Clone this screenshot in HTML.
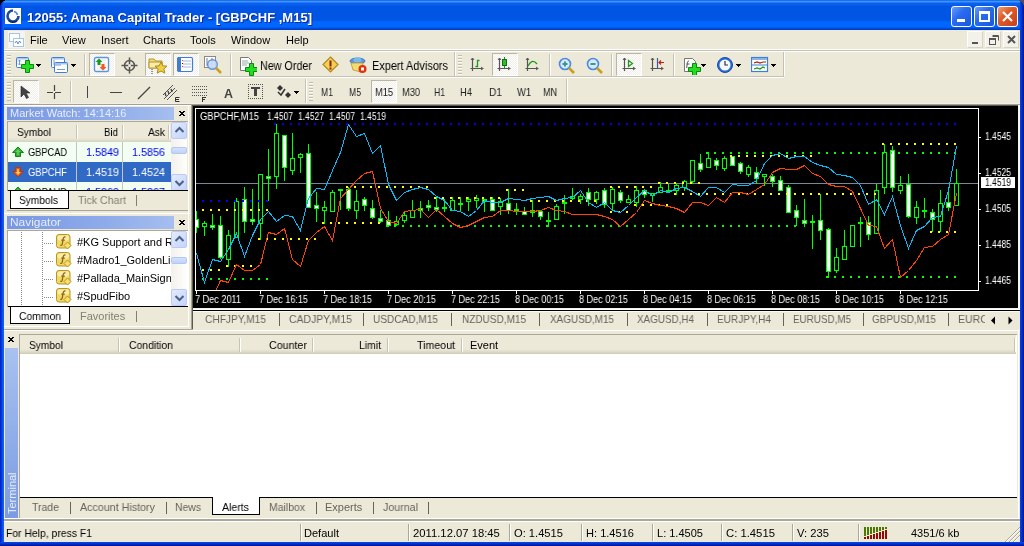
<!DOCTYPE html><html><head><meta charset="utf-8"><style>
*{margin:0;padding:0;box-sizing:border-box}
html,body{width:1024px;height:546px;overflow:hidden;background:#ECE9D8;font-family:"Liberation Sans", sans-serif;font-size:11px;color:#000}
.t{position:absolute;white-space:nowrap;line-height:13px;will-change:transform}
.a{position:absolute}
</style></head><body><div style="position:absolute;left:0px;top:0px;width:1024px;height:30px;background:linear-gradient(to bottom,#0047D8 0px,#3D95FF 1px,#3D95FF 2px,#0A5FEF 3px,#0A5FEF 5px,#0055E5 6px,#0055E5 20px,#0066FF 22px,#0066FF 27px,#0040C8 29px,#0040C8 30px)"></div>
<div style="position:absolute;left:0px;top:0px;width:4px;height:546px;background:linear-gradient(to right,#001EA0,#0030DD 1px,#0040F0 2px,#1060F0 3px)"></div>
<div style="position:absolute;left:1020px;top:0px;width:4px;height:546px;background:linear-gradient(to right,#0A40F0,#0030C8 2px,#00108A 4px)"></div>
<div style="position:absolute;left:0px;top:542px;width:1024px;height:4px;background:linear-gradient(to bottom,#0847F5,#0030C8 2px,#001090 4px)"></div>
<div style="position:absolute;left:0px;top:0px;width:5px;height:1px;background:#000"></div>
<div style="position:absolute;left:1019px;top:0px;width:5px;height:1px;background:#505050"></div>
<div style="position:absolute;left:0px;top:1px;width:3px;height:1px;background:#000"></div>
<div style="position:absolute;left:1021px;top:1px;width:3px;height:1px;background:#505050"></div>
<div style="position:absolute;left:0px;top:2px;width:2px;height:1px;background:#000"></div>
<div style="position:absolute;left:1022px;top:2px;width:2px;height:1px;background:#505050"></div>
<div style="position:absolute;left:0px;top:3px;width:1px;height:1px;background:#000"></div>
<div style="position:absolute;left:1023px;top:3px;width:1px;height:1px;background:#505050"></div>
<div style="position:absolute;left:0px;top:4px;width:1px;height:1px;background:#000"></div>
<div style="position:absolute;left:1023px;top:4px;width:1px;height:1px;background:#505050"></div>
<svg class="a" style="left:5px;top:8px" width="16" height="16" viewBox="0 0 16 16">
<rect x="0" y="0" width="16" height="16" fill="#fff"/>
<path d="M8 2.5A5.5 5.5 0 1 0 13.5 8" fill="none" stroke="#1E4A9A" stroke-width="2.6"/>
<path d="M3.5 12.5Q7 15.5 12 13" fill="none" stroke="#0A2A70" stroke-width="1.6"/>
<path d="M9 3.5A4.5 4.5 0 0 1 12.5 7" fill="none" stroke="#5A8AD0" stroke-width="1.6"/>
<circle cx="8" cy="8" r="2.2" fill="#fff"/>
</svg>
<div class="t" style="left:27px;top:10px;font-size:13px;line-height:15px;color:#fff;font-weight:bold;transform:scaleX(1.0003);transform-origin:0 0;text-shadow:1px 1px 0 #0A2A9A">12055: Amana Capital Trader - [GBPCHF ,M15]</div>
<div class="a" style="left:951px;top:6px;width:21px;height:21px;border:1px solid #fff;border-radius:3px;background:linear-gradient(135deg,#6A9CF7 0%,#2A6BF0 40%,#1A56E0 100%)"></div>
<div class="a" style="left:974px;top:6px;width:21px;height:21px;border:1px solid #fff;border-radius:3px;background:linear-gradient(135deg,#6A9CF7 0%,#2A6BF0 40%,#1A56E0 100%)"></div>
<div class="a" style="left:997px;top:6px;width:21px;height:21px;border:1px solid #fff;border-radius:3px;background:linear-gradient(135deg,#F0A070 0%,#E05A28 40%,#C8401A 100%)"></div>
<div style="position:absolute;left:957px;top:19px;width:8px;height:3px;background:#fff"></div>
<div style="position:absolute;left:979px;top:11px;width:11px;height:11px;border:2px solid #fff;border-top-width:3px"></div>
<svg class="a" style="left:1001px;top:10px" width="13" height="13" viewBox="0 0 13 13"><path d="M2 2L11 11M11 2L2 11" stroke="#fff" stroke-width="2.2"/></svg>
<svg class="a" style="left:8px;top:31px" width="17" height="17" viewBox="0 0 17 17">
<rect x="0" y="0" width="17" height="17" fill="#F4F4F0"/>
<rect x="1.5" y="2.5" width="10" height="8" fill="#fff" stroke="#5A8AD8" stroke-dasharray="1 1"/>
<rect x="5.5" y="7.5" width="10" height="8" fill="#fff" stroke="#5A8AD8" stroke-dasharray="1 1"/>
<path d="M7 12l1.5-2 1.5 3 1.5-3 1.5 2" stroke="#5A8AD8" fill="none"/>
</svg>
<div class="t" style="left:30px;top:34px;font-size:11px;line-height:13px;">File</div>
<div class="t" style="left:62px;top:34px;font-size:11px;line-height:13px;">View</div>
<div class="t" style="left:101px;top:34px;font-size:11px;line-height:13px;">Insert</div>
<div class="t" style="left:143px;top:34px;font-size:11px;line-height:13px;">Charts</div>
<div class="t" style="left:190px;top:34px;font-size:11px;line-height:13px;">Tools</div>
<div class="t" style="left:231px;top:34px;font-size:11px;line-height:13px;">Window</div>
<div class="t" style="left:286px;top:34px;font-size:11px;line-height:13px;">Help</div>
<div style="position:absolute;left:967px;top:31px;width:16px;height:17px;background:#F2F1EA;border:1px solid;border-color:#FFF #D8D4C4 #D8D4C4 #FFF"></div>
<div style="position:absolute;left:985px;top:31px;width:16px;height:17px;background:#F2F1EA;border:1px solid;border-color:#FFF #D8D4C4 #D8D4C4 #FFF"></div>
<div style="position:absolute;left:1003px;top:31px;width:16px;height:17px;background:#F2F1EA;border:1px solid;border-color:#FFF #D8D4C4 #D8D4C4 #FFF"></div>
<div style="position:absolute;left:972px;top:42px;width:6px;height:2px;background:#555"></div>
<svg class="a" style="left:989px;top:35px" width="10" height="10" viewBox="0 0 10 10"><path d="M3.5 0.5h6v5" fill="none" stroke="#555"/><rect x="0.5" y="3.5" width="6" height="6" fill="none" stroke="#555" stroke-width="1"/><path d="M0.5 4.5h6M3.5 1.5h6" stroke="#555"/></svg>
<svg class="a" style="left:1007px;top:35px" width="9" height="9" viewBox="0 0 9 9"><path d="M1 1L8 8M8 1L1 8" stroke="#555" stroke-width="2"/></svg>
<div style="position:absolute;left:4px;top:49px;width:1016px;height:1px;background:#FFFFFF"></div>
<div style="position:absolute;left:4px;top:50px;width:1016px;height:1px;background:#C5C2B2"></div>
<div style="position:absolute;left:4px;top:51px;width:1016px;height:1px;background:#FFFFFF"></div>
<div style="position:absolute;left:4px;top:76px;width:780px;height:1px;background:#C5C2B2"></div>
<div style="position:absolute;left:4px;top:77px;width:780px;height:1px;background:#FFFFFF"></div>
<div style="position:absolute;left:4px;top:103px;width:1016px;height:1px;background:#F2F0E6"></div>
<div style="position:absolute;left:4px;top:104px;width:1016px;height:1px;background:#A5A28F"></div>
<div style="position:absolute;left:4px;top:105px;width:188px;height:1px;background:#FFFFFF"></div>
<div style="position:absolute;left:454px;top:52px;width:1px;height:24px;background:#C5C2B2"></div>
<div style="position:absolute;left:455px;top:52px;width:1px;height:24px;background:#FFF"></div>
<div style="position:absolute;left:783px;top:52px;width:1px;height:24px;background:#C5C2B2"></div>
<div style="position:absolute;left:784px;top:52px;width:1px;height:24px;background:#FFF"></div>
<div style="position:absolute;left:305px;top:79px;width:1px;height:24px;background:#C5C2B2"></div>
<div style="position:absolute;left:306px;top:79px;width:1px;height:24px;background:#FFF"></div>
<div style="position:absolute;left:566px;top:79px;width:1px;height:24px;background:#C5C2B2"></div>
<div style="position:absolute;left:567px;top:79px;width:1px;height:24px;background:#FFF"></div>
<div style="position:absolute;left:306px;top:102px;width:1px;height:1px;"></div>
<svg class="a" style="left:7px;top:55px" width="4" height="20" shape-rendering="crispEdges"><rect x="0" y="0" width="4" height="1" fill="#C1BEAC"/><rect x="0" y="1" width="4" height="1" fill="#FBFAF6"/><rect x="0" y="3" width="4" height="1" fill="#C1BEAC"/><rect x="0" y="4" width="4" height="1" fill="#FBFAF6"/><rect x="0" y="6" width="4" height="1" fill="#C1BEAC"/><rect x="0" y="7" width="4" height="1" fill="#FBFAF6"/><rect x="0" y="9" width="4" height="1" fill="#C1BEAC"/><rect x="0" y="10" width="4" height="1" fill="#FBFAF6"/><rect x="0" y="12" width="4" height="1" fill="#C1BEAC"/><rect x="0" y="13" width="4" height="1" fill="#FBFAF6"/><rect x="0" y="15" width="4" height="1" fill="#C1BEAC"/><rect x="0" y="16" width="4" height="1" fill="#FBFAF6"/><rect x="0" y="18" width="4" height="1" fill="#C1BEAC"/><rect x="0" y="19" width="4" height="1" fill="#FBFAF6"/></svg>
<svg class="a" style="left:16px;top:57px;will-change:transform" width="18" height="16" viewBox="0 0 18 16"><rect x="0.5" y="0.5" width="12" height="10" rx="1" fill="#fff" stroke="#3C7ED8"/><rect x="1" y="1" width="11" height="1.5" fill="#A8C8F0"/><path d="M3.5 3v5M2 4.5l1.5-1.5 1.5 1.5M2 6.5l1.5 1.5 1.5-1.5" stroke="#7A9AC8" fill="none"/><path d="M9.5 3.5h4v4h4v4h-4v4h-4v-4h-4v-4h4z" fill="#22DD22" stroke="#0A8A0A" stroke-width="1"/></svg>
<svg class="a" style="left:36px;top:64px" width="5" height="3" shape-rendering="crispEdges"><path d="M0 0H5L2.5 3Z" fill="#000"/></svg>
<svg class="a" style="left:51px;top:57px;will-change:transform" width="18" height="16" viewBox="0 0 18 16"><rect x="0.5" y="0.5" width="13" height="10" rx="1" fill="#fff" stroke="#3C7ED8"/><rect x="1" y="1" width="12" height="1.5" fill="#A8C8F0"/><rect x="3.5" y="5.5" width="13" height="10" rx="1" fill="#fff" stroke="#3C7ED8"/><rect x="4" y="6" width="12" height="1.5" fill="#A8C8F0"/><path d="M3 3v5h7M6 12.5h8" stroke="#7A9AC8" fill="none"/></svg>
<svg class="a" style="left:71px;top:64px" width="5" height="3" shape-rendering="crispEdges"><path d="M0 0H5L2.5 3Z" fill="#000"/></svg>
<div style="position:absolute;left:84px;top:54px;width:1px;height:22px;background:#C5C2B2"></div>
<div style="position:absolute;left:85px;top:54px;width:1px;height:22px;background:#FFF"></div>
<div class="a" style="left:89px;top:53px;width:26px;height:23px;border:1px solid;border-color:#B9B6A4 #FFF #FFF #B9B6A4;background-color:#F7F6F1;background-image:repeating-conic-gradient(#FFFFFF 0 25%,#F0EEE6 0 50%);background-size:2px 2px"></div>
<svg class="a" style="left:93px;top:56px;will-change:transform" width="17" height="17" viewBox="0 0 17 17"><rect x="1.5" y="1.5" width="14" height="14" rx="1.5" fill="#fff" stroke="#5A96E0" stroke-width="1.4"/><path d="M4 4h9M4 7h9M4 10h9M4 13h9" stroke="#E0E4EA"/><path d="M6 2.5L9.5 6H7.5V9H4.5V6H2.5Z" fill="#1A9A1A"/><path d="M10 14.5L13.5 11H11.5V8H8.5V11H6.5Z" fill="#F05A20"/></svg>
<svg class="a" style="left:121px;top:57px;will-change:transform" width="17" height="17" viewBox="0 0 17 17"><circle cx="8.5" cy="8.5" r="5" fill="none" stroke="#555" stroke-width="1.5"/><path d="M8.5 0.5v16M0.5 8.5h16" stroke="#555" stroke-width="1.5"/><circle cx="8.5" cy="8.5" r="1.5" fill="#ECE9D8"/></svg>
<div class="a" style="left:145px;top:53px;width:26px;height:23px;border:1px solid;border-color:#B9B6A4 #FFF #FFF #B9B6A4;background-color:#F7F6F1;background-image:repeating-conic-gradient(#FFFFFF 0 25%,#F0EEE6 0 50%);background-size:2px 2px"></div>
<svg class="a" style="left:148px;top:56px;will-change:transform" width="20" height="18" viewBox="0 0 20 18"><path d="M1 3h5l1.5 2H14v7H1z" fill="#F4DC78" stroke="#B8942A"/><path d="M1 6h13v6H1z" fill="#FBEBA8" stroke="#B8942A"/><path d="M4 13v5" stroke="#333" stroke-dasharray="1 1"/><path d="M13 6l1.8 3.8 4.2.4-3.2 2.8 1 4.1L13 15l-3.8 2.1 1-4.1-3.2-2.8 4.2-.4z" fill="#F0D040" stroke="#A88A20"/></svg>
<div class="a" style="left:173px;top:53px;width:26px;height:23px;border:1px solid;border-color:#B9B6A4 #FFF #FFF #B9B6A4;background-color:#F7F6F1;background-image:repeating-conic-gradient(#FFFFFF 0 25%,#F0EEE6 0 50%);background-size:2px 2px"></div>
<svg class="a" style="left:177px;top:57px;will-change:transform" width="17" height="16" viewBox="0 0 17 16"><rect x="0.5" y="0.5" width="15" height="14" rx="1.5" fill="#fff" stroke="#3C7ED8" stroke-width="1.2"/><rect x="1" y="1" width="3" height="13" fill="#4A7AC8"/><path d="M6 4h8M6 7h8M6 10h8" stroke="#A0B8E0"/><rect x="5" y="3" width="1" height="1" fill="#E04020"/><rect x="5" y="6" width="1" height="1" fill="#222"/><rect x="5" y="9" width="1" height="1" fill="#E04020"/></svg>
<svg class="a" style="left:204px;top:56px;will-change:transform" width="20" height="20" viewBox="0 0 20 20"><rect x="0.5" y="0.5" width="11" height="11" fill="#fff" stroke="#888"/><path d="M3 2v8M8 2v8" stroke="#6A7AA8"/><circle cx="8.5" cy="8.5" r="4.8" fill="#C8DCF8" stroke="#5A8AD8" stroke-width="1.4" opacity="0.9"/><path d="M12 12l5 5" stroke="#C8A020" stroke-width="2.5"/></svg>
<div style="position:absolute;left:230px;top:54px;width:1px;height:22px;background:#C5C2B2"></div>
<div style="position:absolute;left:231px;top:54px;width:1px;height:22px;background:#FFF"></div>
<svg class="a" style="left:239px;top:56px;will-change:transform" width="18" height="20" viewBox="0 0 18 20"><path d="M1.5 1.5h8l3 3v10h-11z" fill="#fff" stroke="#777"/><path d="M3 5h6M3 7h7M3 9h5" stroke="#9AA"/><path d="M10.5 7.5h4v4h4v4h-4v4h-4v-4h-4v-4h4z" fill="#22DD22" stroke="#0A8A0A" stroke-width="1"/></svg>
<div class="t" style="left:260px;top:59px;font-size:12px;line-height:14px;transform:scaleX(0.8963);transform-origin:0 0;">New Order</div>
<svg class="a" style="left:322px;top:56px;will-change:transform" width="17" height="18" viewBox="0 0 17 18"><path d="M8.5 1L16 8.5 8.5 16 1 8.5z" fill="#F8D050" stroke="#B08A20" stroke-width="1.2"/><path d="M8.5 4.5v6" stroke="#8A2010" stroke-width="2"/><rect x="7.5" y="11.5" width="2" height="2" fill="#8A2010"/></svg>
<svg class="a" style="left:349px;top:56px;will-change:transform" width="19" height="19" viewBox="0 0 19 19"><ellipse cx="8.5" cy="5" rx="7.5" ry="3" fill="#5A9AE0" stroke="#2A6AB0" stroke-width="0.8"/><ellipse cx="8.5" cy="4" rx="4" ry="2.5" fill="#7AB8F0"/><path d="M2 7l2 7 8 2 2-9z" fill="#F4DC70" stroke="#B8942A" stroke-width="0.8"/><circle cx="13.5" cy="13" r="4" fill="#E03010"/><rect x="12" y="11.5" width="3" height="3" fill="#fff"/></svg>
<div class="t" style="left:372px;top:59px;font-size:12px;line-height:14px;transform:scaleX(0.9117);transform-origin:0 0;">Expert Advisors</div>
<svg class="a" style="left:458px;top:55px" width="4" height="20" shape-rendering="crispEdges"><rect x="0" y="0" width="4" height="1" fill="#C1BEAC"/><rect x="0" y="1" width="4" height="1" fill="#FBFAF6"/><rect x="0" y="3" width="4" height="1" fill="#C1BEAC"/><rect x="0" y="4" width="4" height="1" fill="#FBFAF6"/><rect x="0" y="6" width="4" height="1" fill="#C1BEAC"/><rect x="0" y="7" width="4" height="1" fill="#FBFAF6"/><rect x="0" y="9" width="4" height="1" fill="#C1BEAC"/><rect x="0" y="10" width="4" height="1" fill="#FBFAF6"/><rect x="0" y="12" width="4" height="1" fill="#C1BEAC"/><rect x="0" y="13" width="4" height="1" fill="#FBFAF6"/><rect x="0" y="15" width="4" height="1" fill="#C1BEAC"/><rect x="0" y="16" width="4" height="1" fill="#FBFAF6"/><rect x="0" y="18" width="4" height="1" fill="#C1BEAC"/><rect x="0" y="19" width="4" height="1" fill="#FBFAF6"/></svg>
<svg class="a" style="left:470px;top:57px;will-change:transform" width="15" height="16" viewBox="0 0 15 16"><path d="M2.5 1v13M0.5 11.5h13" stroke="#555" stroke-width="1.2"/><path d="M1 3l1.5-2 1.5 2M11 10l2 1.5-2 1.5" stroke="#555" fill="none"/><path d="M5.5 9.5h2v-6h2" stroke="#1A9A1A" stroke-width="1.3" fill="none"/></svg>
<div class="a" style="left:492px;top:53px;width:26px;height:23px;border:1px solid;border-color:#B9B6A4 #FFF #FFF #B9B6A4;background-color:#F7F6F1;background-image:repeating-conic-gradient(#FFFFFF 0 25%,#F0EEE6 0 50%);background-size:2px 2px"></div>
<svg class="a" style="left:497px;top:57px;will-change:transform" width="15" height="16" viewBox="0 0 15 16"><path d="M2.5 1v13M0.5 11.5h13" stroke="#555" stroke-width="1.2"/><path d="M1 3l1.5-2 1.5 2M11 10l2 1.5-2 1.5" stroke="#555" fill="none"/><path d="M7.5 0v12" stroke="#1A8A1A"/><rect x="5.5" y="2.5" width="4" height="6" fill="#28C028" stroke="#107010"/></svg>
<svg class="a" style="left:525px;top:57px;will-change:transform" width="15" height="16" viewBox="0 0 15 16"><path d="M2.5 1v13M0.5 11.5h13" stroke="#555" stroke-width="1.2"/><path d="M1 3l1.5-2 1.5 2M11 10l2 1.5-2 1.5" stroke="#555" fill="none"/><path d="M3 9C5 5 8 2 12 7" stroke="#1A9A1A" stroke-width="1.3" fill="none"/></svg>
<div style="position:absolute;left:549px;top:54px;width:1px;height:22px;background:#C5C2B2"></div>
<div style="position:absolute;left:550px;top:54px;width:1px;height:22px;background:#FFF"></div>
<svg class="a" style="left:558px;top:57px;will-change:transform" width="18" height="18" viewBox="0 0 18 18"><circle cx="7" cy="7" r="5.5" fill="#D8E8FC" stroke="#4A8AE0" stroke-width="1.6"/><path d="M4.5 7h5" stroke="#3A9A8A" stroke-width="2"/><path d="M7 4.5v5" stroke="#3A9A8A" stroke-width="2"/><path d="M11 11l5 5" stroke="#C8A020" stroke-width="2.6"/></svg>
<svg class="a" style="left:586px;top:57px;will-change:transform" width="18" height="18" viewBox="0 0 18 18"><circle cx="7" cy="7" r="5.5" fill="#D8E8FC" stroke="#4A8AE0" stroke-width="1.6"/><path d="M4.5 7h5" stroke="#3A9A8A" stroke-width="2"/><path d="M11 11l5 5" stroke="#C8A020" stroke-width="2.6"/></svg>
<div style="position:absolute;left:611px;top:54px;width:1px;height:22px;background:#C5C2B2"></div>
<div style="position:absolute;left:612px;top:54px;width:1px;height:22px;background:#FFF"></div>
<div class="a" style="left:616px;top:53px;width:26px;height:23px;border:1px solid;border-color:#B9B6A4 #FFF #FFF #B9B6A4;background-color:#F7F6F1;background-image:repeating-conic-gradient(#FFFFFF 0 25%,#F0EEE6 0 50%);background-size:2px 2px"></div>
<svg class="a" style="left:622px;top:57px;will-change:transform" width="15" height="16" viewBox="0 0 15 16"><path d="M2.5 1v13M0.5 11.5h13" stroke="#555" stroke-width="1.2"/><path d="M1 3l1.5-2 1.5 2M11 10l2 1.5-2 1.5" stroke="#555" fill="none"/><path d="M6.5 3.5v6l4-3z" fill="none" stroke="#1A9A1A" stroke-width="1.3"/></svg>
<svg class="a" style="left:650px;top:57px;will-change:transform" width="15" height="16" viewBox="0 0 15 16"><path d="M2.5 1v13M0.5 11.5h13" stroke="#555" stroke-width="1.2"/><path d="M1 3l1.5-2 1.5 2M11 10l2 1.5-2 1.5" stroke="#555" fill="none"/><path d="M7.5 1v10" stroke="#3A5AA8" stroke-width="1.2"/><path d="M14 5.5H9M11 3.5l-2 2 2 2" stroke="#C02010" stroke-width="1.2" fill="none"/></svg>
<div style="position:absolute;left:673px;top:54px;width:1px;height:22px;background:#C5C2B2"></div>
<div style="position:absolute;left:674px;top:54px;width:1px;height:22px;background:#FFF"></div>
<svg class="a" style="left:683px;top:57px;will-change:transform" width="18" height="18" viewBox="0 0 18 18"><path d="M1.5 1.5h8l3 3v10h-11z" fill="#fff" stroke="#777"/><path d="M6 4c-1.5 0-1.5 1-1.8 3l-.5 4M3.5 7h3" stroke="#555" fill="none"/><path d="M9.5 6.5h4v4h4v4h-4v4h-4v-4h-4v-4h4z" fill="#22DD22" stroke="#0A8A0A" stroke-width="1"/></svg>
<svg class="a" style="left:701px;top:64px" width="5" height="3" shape-rendering="crispEdges"><path d="M0 0H5L2.5 3Z" fill="#000"/></svg>
<svg class="a" style="left:716px;top:56px;will-change:transform" width="18" height="18" viewBox="0 0 18 18"><circle cx="9" cy="9" r="7.5" fill="#2A6AD8" stroke="#1A4AA8"/><circle cx="9" cy="9" r="5.5" fill="#F4F8FF"/><path d="M9 5v4h3" stroke="#333" stroke-width="1.2" fill="none"/></svg>
<svg class="a" style="left:736px;top:64px" width="5" height="3" shape-rendering="crispEdges"><path d="M0 0H5L2.5 3Z" fill="#000"/></svg>
<svg class="a" style="left:751px;top:56px;will-change:transform" width="18" height="18" viewBox="0 0 18 18"><rect x="0.5" y="1.5" width="16" height="14" fill="#fff" stroke="#3C7ED8" stroke-width="1.2"/><rect x="1" y="2" width="15" height="2" fill="#8AB4E8"/><path d="M1 9h15" stroke="#3C7ED8"/><path d="M3 7l3-1 3 1 3-1 3 0" stroke="#A02010" stroke-width="1.2" fill="none"/><path d="M3 13l3-1 3 1 3-2 2 1" stroke="#109A10" stroke-width="1.2" fill="none"/></svg>
<svg class="a" style="left:771px;top:64px" width="5" height="3" shape-rendering="crispEdges"><path d="M0 0H5L2.5 3Z" fill="#000"/></svg>
<svg class="a" style="left:7px;top:82px" width="4" height="19" shape-rendering="crispEdges"><rect x="0" y="0" width="4" height="1" fill="#C1BEAC"/><rect x="0" y="1" width="4" height="1" fill="#FBFAF6"/><rect x="0" y="3" width="4" height="1" fill="#C1BEAC"/><rect x="0" y="4" width="4" height="1" fill="#FBFAF6"/><rect x="0" y="6" width="4" height="1" fill="#C1BEAC"/><rect x="0" y="7" width="4" height="1" fill="#FBFAF6"/><rect x="0" y="9" width="4" height="1" fill="#C1BEAC"/><rect x="0" y="10" width="4" height="1" fill="#FBFAF6"/><rect x="0" y="12" width="4" height="1" fill="#C1BEAC"/><rect x="0" y="13" width="4" height="1" fill="#FBFAF6"/><rect x="0" y="15" width="4" height="1" fill="#C1BEAC"/><rect x="0" y="16" width="4" height="1" fill="#FBFAF6"/><rect x="0" y="18" width="4" height="1" fill="#C1BEAC"/><rect x="0" y="19" width="4" height="1" fill="#FBFAF6"/></svg>
<div class="a" style="left:13px;top:80px;width:26px;height:23px;border:1px solid;border-color:#B9B6A4 #FFF #FFF #B9B6A4;background-color:#F7F6F1;background-image:repeating-conic-gradient(#FFFFFF 0 25%,#F0EEE6 0 50%);background-size:2px 2px"></div>
<svg class="a" style="left:20px;top:85px;will-change:transform" width="12" height="14" viewBox="0 0 12 14"><path d="M1 1v11l3-3 2.5 4.5 2-1-2.5-4.5h4z" fill="#444" stroke="#222" stroke-width="0.6"/></svg>
<svg class="a" style="left:46px;top:84px;will-change:transform" width="16" height="16" viewBox="0 0 16 16"><path d="M8.5 1v6M8.5 9v6M1 8.5h6M9 8.5h6" stroke="#444" stroke-width="1.2"/></svg>
<div style="position:absolute;left:70px;top:81px;width:1px;height:21px;background:#C5C2B2"></div>
<div style="position:absolute;left:71px;top:81px;width:1px;height:21px;background:#FFF"></div>
<div style="position:absolute;left:87px;top:86px;width:1px;height:12px;background:#444"></div>
<div style="position:absolute;left:110px;top:92px;width:12px;height:1px;background:#444"></div>
<svg class="a" style="left:137px;top:86px;will-change:transform" width="14" height="14" viewBox="0 0 14 14"><path d="M1 13L13 1" stroke="#444" stroke-width="1.2"/></svg>
<svg class="a" style="left:162px;top:84px;will-change:transform" width="19" height="19" viewBox="0 0 19 19"><path d="M1 11L11 1M2 15L13 4M5 16L15 6" stroke="#555" stroke-width="1"/><path d="M3 9l1 3M6 7l1 3M9 5l1 3" stroke="#444" stroke-width="1.4"/><path d="M13.5 13.5h4M13.5 15.5h3.5M13.5 17.5h4M13.5 13.5v4" stroke="#333" stroke-width="1"/></svg>
<svg class="a" style="left:191px;top:84px;will-change:transform" width="18" height="19" viewBox="0 0 18 19"><g shape-rendering="crispEdges" fill="#555"><rect x="1" y="2" width="1" height="1"/><rect x="3" y="2" width="1" height="1"/><rect x="5" y="2" width="1" height="1"/><rect x="7" y="2" width="1" height="1"/><rect x="9" y="2" width="1" height="1"/><rect x="11" y="2" width="1" height="1"/><rect x="13" y="2" width="1" height="1"/><rect x="15" y="2" width="1" height="1"/><rect x="1" y="5" width="1" height="1"/><rect x="3" y="5" width="1" height="1"/><rect x="5" y="5" width="1" height="1"/><rect x="7" y="5" width="1" height="1"/><rect x="9" y="5" width="1" height="1"/><rect x="11" y="5" width="1" height="1"/><rect x="13" y="5" width="1" height="1"/><rect x="15" y="5" width="1" height="1"/><rect x="1" y="8" width="1" height="1"/><rect x="3" y="8" width="1" height="1"/><rect x="5" y="8" width="1" height="1"/><rect x="7" y="8" width="1" height="1"/><rect x="9" y="8" width="1" height="1"/><rect x="11" y="8" width="1" height="1"/><rect x="13" y="8" width="1" height="1"/><rect x="15" y="8" width="1" height="1"/><rect x="1" y="11" width="1" height="1"/><rect x="3" y="11" width="1" height="1"/><rect x="5" y="11" width="1" height="1"/><rect x="7" y="11" width="1" height="1"/><rect x="9" y="11" width="1" height="1"/><rect x="11" y="11" width="1" height="1"/><rect x="13" y="11" width="1" height="1"/><rect x="15" y="11" width="1" height="1"/><rect x="11" y="13" width="1" height="5" fill="#333"/><rect x="11" y="13" width="4" height="1" fill="#333"/><rect x="11" y="15" width="3" height="1" fill="#333"/></g></svg>
<div class="t" style="left:224px;top:87px;font-size:12px;line-height:14px;color:#444;font-weight:bold;transform:scaleX(1.0378);transform-origin:0 0;">A</div>
<svg class="a" style="left:248px;top:84px;will-change:transform" width="15" height="15" viewBox="0 0 15 15"><g fill="#555" shape-rendering="crispEdges"><rect x="0" y="0" width="1" height="1"/><rect x="0" y="14" width="1" height="1"/><rect x="2" y="0" width="1" height="1"/><rect x="2" y="14" width="1" height="1"/><rect x="4" y="0" width="1" height="1"/><rect x="4" y="14" width="1" height="1"/><rect x="6" y="0" width="1" height="1"/><rect x="6" y="14" width="1" height="1"/><rect x="8" y="0" width="1" height="1"/><rect x="8" y="14" width="1" height="1"/><rect x="10" y="0" width="1" height="1"/><rect x="10" y="14" width="1" height="1"/><rect x="12" y="0" width="1" height="1"/><rect x="12" y="14" width="1" height="1"/><rect x="14" y="0" width="1" height="1"/><rect x="14" y="14" width="1" height="1"/><rect x="0" y="2" width="1" height="1"/><rect x="14" y="2" width="1" height="1"/><rect x="0" y="4" width="1" height="1"/><rect x="14" y="4" width="1" height="1"/><rect x="0" y="6" width="1" height="1"/><rect x="14" y="6" width="1" height="1"/><rect x="0" y="8" width="1" height="1"/><rect x="14" y="8" width="1" height="1"/><rect x="0" y="10" width="1" height="1"/><rect x="14" y="10" width="1" height="1"/><rect x="0" y="12" width="1" height="1"/><rect x="14" y="12" width="1" height="1"/><rect x="3" y="3" width="9" height="2" fill="#444"/><rect x="6" y="5" width="3" height="7" fill="#444"/></g></svg>
<svg class="a" style="left:276px;top:84px;will-change:transform" width="16" height="16" viewBox="0 0 16 16"><path d="M4 1l3 3-3 3-3-3z" fill="#333"/><path d="M12 8l3 3-3 3-3-3z" fill="#333"/><path d="M2 8l3 3 4-6" stroke="#333" stroke-width="1.5" fill="none"/></svg>
<svg class="a" style="left:294px;top:91px" width="5" height="3" shape-rendering="crispEdges"><path d="M0 0H5L2.5 3Z" fill="#000"/></svg>
<svg class="a" style="left:309px;top:82px" width="4" height="19" shape-rendering="crispEdges"><rect x="0" y="0" width="4" height="1" fill="#C1BEAC"/><rect x="0" y="1" width="4" height="1" fill="#FBFAF6"/><rect x="0" y="3" width="4" height="1" fill="#C1BEAC"/><rect x="0" y="4" width="4" height="1" fill="#FBFAF6"/><rect x="0" y="6" width="4" height="1" fill="#C1BEAC"/><rect x="0" y="7" width="4" height="1" fill="#FBFAF6"/><rect x="0" y="9" width="4" height="1" fill="#C1BEAC"/><rect x="0" y="10" width="4" height="1" fill="#FBFAF6"/><rect x="0" y="12" width="4" height="1" fill="#C1BEAC"/><rect x="0" y="13" width="4" height="1" fill="#FBFAF6"/><rect x="0" y="15" width="4" height="1" fill="#C1BEAC"/><rect x="0" y="16" width="4" height="1" fill="#FBFAF6"/><rect x="0" y="18" width="4" height="1" fill="#C1BEAC"/><rect x="0" y="19" width="4" height="1" fill="#FBFAF6"/></svg>
<div class="a" style="left:371px;top:80px;width:26px;height:23px;border:1px solid;border-color:#B9B6A4 #FFF #FFF #B9B6A4;background-color:#F7F6F1;background-image:repeating-conic-gradient(#FFFFFF 0 25%,#F0EEE6 0 50%);background-size:2px 2px"></div>
<div class="t" style="left:321px;top:86px;font-size:11px;line-height:13px;color:#222;transform:scaleX(0.7853);transform-origin:0 0;">M1</div>
<div class="t" style="left:349px;top:86px;font-size:11px;line-height:13px;color:#222;transform:scaleX(0.7853);transform-origin:0 0;">M5</div>
<div class="t" style="left:375px;top:86px;font-size:11px;line-height:13px;color:#222;transform:scaleX(0.8409);transform-origin:0 0;">M15</div>
<div class="t" style="left:402px;top:86px;font-size:11px;line-height:13px;color:#222;transform:scaleX(0.8409);transform-origin:0 0;">M30</div>
<div class="t" style="left:434px;top:86px;font-size:11px;line-height:13px;color:#222;transform:scaleX(0.7822);transform-origin:0 0;">H1</div>
<div class="t" style="left:460px;top:86px;font-size:11px;line-height:13px;color:#222;transform:scaleX(0.8533);transform-origin:0 0;">H4</div>
<div class="t" style="left:489px;top:86px;font-size:11px;line-height:13px;color:#222;transform:scaleX(0.9244);transform-origin:0 0;">D1</div>
<div class="t" style="left:517px;top:86px;font-size:11px;line-height:13px;color:#222;transform:scaleX(0.8485);transform-origin:0 0;">W1</div>
<div class="t" style="left:543px;top:86px;font-size:11px;line-height:13px;color:#222;transform:scaleX(0.8190);transform-origin:0 0;">MN</div>
<div style="position:absolute;left:188px;top:106px;width:1px;height:221px;background:#FFFFFF"></div>
<div style="position:absolute;left:191px;top:105px;width:1px;height:225px;background:#A5A28F"></div>
<div style="position:absolute;left:192px;top:105px;width:1px;height:225px;background:#5A5850"></div>
<div style="position:absolute;left:4px;top:326px;width:185px;height:1px;background:#FFFFFF"></div>
<div style="position:absolute;left:4px;top:329px;width:189px;height:1px;background:#ACA899"></div>
<div class="a" style="left:7px;top:107px;width:167px;height:13px;background:linear-gradient(to right,#7797E2,#8FACEA 60%,#A6BEF0)"></div>
<div class="t" style="left:10px;top:107px;font-size:11px;line-height:13px;color:#E6EDF9;transform:scaleX(0.9960);transform-origin:0 0;">Market Watch: 14:14:16</div>
<svg class="a" style="left:179px;top:111px" width="6" height="5" shape-rendering="crispEdges"><path d="M0 0h2v1h-2zM4 0h2v1h-2zM1 1h4v1h-4zM2 2h2v1h-2zM1 3h4v1h-4zM0 4h2v1h-2zM4 4h2v1h-2z" fill="#000"/></svg>
<div style="position:absolute;left:7px;top:121px;width:181px;height:70px;background:#ECE9D8;border-top:1px solid #ACA899;border-left:1px solid #ACA899"></div>
<div style="position:absolute;left:8px;top:122px;width:163px;height:20px;background:linear-gradient(to bottom,#ECE9D8 0,#ECE9D8 16px,#E2DECD 18px,#D6D2BE 20px)"></div>
<div style="position:absolute;left:76px;top:125px;width:1px;height:14px;background:#C7C5B2"></div>
<div style="position:absolute;left:77px;top:125px;width:1px;height:14px;background:#FFF"></div>
<div style="position:absolute;left:122px;top:125px;width:1px;height:14px;background:#C7C5B2"></div>
<div style="position:absolute;left:123px;top:125px;width:1px;height:14px;background:#FFF"></div>
<div style="position:absolute;left:168px;top:125px;width:1px;height:14px;background:#C7C5B2"></div>
<div style="position:absolute;left:169px;top:125px;width:1px;height:14px;background:#FFF"></div>
<div class="t" style="left:17px;top:126px;font-size:11px;line-height:13px;transform:scaleX(0.9267);transform-origin:0 0;">Symbol</div>
<div class="t" style="left:104px;top:126px;font-size:11px;line-height:13px;transform:scaleX(0.8802);transform-origin:0 0;">Bid</div>
<div class="t" style="left:148px;top:126px;font-size:11px;line-height:13px;transform:scaleX(0.9267);transform-origin:0 0;">Ask</div>
<div style="position:absolute;left:8px;top:142px;width:163px;height:48px;background:#F1FEF1"></div>
<div style="position:absolute;left:8px;top:162px;width:163px;height:20px;background:#316AC5"></div>
<div style="position:absolute;left:76px;top:142px;width:1px;height:48px;background:#C4C4C4"></div>
<div style="position:absolute;left:122px;top:142px;width:1px;height:48px;background:#C4C4C4"></div>
<svg class="a" style="left:12px;top:146px" width="12" height="12" viewBox="-0.5 -0.5 12 12"><path d="M5.5 0.5L11 6H8V10H3V6H0Z" fill="#2DB02D" stroke="#0B7A0B" stroke-width="0.9"/><path d="M5.5 2.5L8 5.5H6.3V8.5H4.7V5.5H3Z" fill="#8FE08F" opacity="0.6"/></svg>
<svg class="a" style="left:12px;top:166px" width="12" height="12" viewBox="-0.5 -0.5 12 12"><path d="M5.5 10.5L11 5H8V1H3V5H0Z" fill="#E8561E" stroke="#B0380E" stroke-width="0.9"/><path d="M5.5 8.5L8 5.5H6.3V2.5H4.7V5.5H3Z" fill="#FAD060"/></svg>
<div class="t" style="left:28px;top:146px;font-size:11px;line-height:13px;transform:scaleX(0.8393);transform-origin:0 0;">GBPCAD</div>
<div class="t" style="left:86px;top:146px;font-size:11px;line-height:13px;color:#0000FF;transform:scaleX(0.9796);transform-origin:0 0;">1.5849</div>
<div class="t" style="left:132px;top:146px;font-size:11px;line-height:13px;color:#0000FF;transform:scaleX(0.9796);transform-origin:0 0;">1.5856</div>
<div class="t" style="left:28px;top:166px;font-size:11px;line-height:13px;color:#fff;transform:scaleX(0.8507);transform-origin:0 0;">GBPCHF</div>
<div class="t" style="left:86px;top:166px;font-size:11px;line-height:13px;color:#fff;transform:scaleX(0.9796);transform-origin:0 0;">1.4519</div>
<div class="t" style="left:132px;top:166px;font-size:11px;line-height:13px;color:#fff;transform:scaleX(0.9796);transform-origin:0 0;">1.4524</div>
<div class="a" style="left:0px;top:182px;width:171px;height:8px;overflow:hidden"><svg class="a" style="left:12px;top:4px" width="12" height="12" viewBox="-0.5 -0.5 12 12"><path d="M5.5 0.5L11 6H8V10H3V6H0Z" fill="#2DB02D" stroke="#0B7A0B" stroke-width="0.9"/><path d="M5.5 2.5L8 5.5H6.3V8.5H4.7V5.5H3Z" fill="#8FE08F" opacity="0.6"/></svg></div>
<div class="a" style="left:0px;top:182px;width:171px;height:8px;overflow:hidden">
<div class="t" style="left:28px;top:4px;font-size:11px;line-height:13px;transform:scaleX(0.8542);transform-origin:0 0;">GBPAUD</div>
<div class="t" style="left:86px;top:4px;font-size:11px;line-height:13px;color:#0000FF;transform:scaleX(0.9796);transform-origin:0 0;">1.5260</div>
<div class="t" style="left:132px;top:4px;font-size:11px;line-height:13px;color:#0000FF;transform:scaleX(0.9796);transform-origin:0 0;">1.5267</div>
</div>
<div style="position:absolute;left:171px;top:122px;width:16px;height:69px;background:linear-gradient(to right,#F3F1EC,#FEFEFB)"></div>
<div class="a" style="left:171px;top:122px;width:16px;height:17px;border:1px solid #BACBF5;border-radius:2px;background:linear-gradient(135deg,#E4EBFE,#C4D4FC)"></div>
<svg class="a" style="left:171px;top:122px" width="17" height="17" viewBox="0 0 17 17"><path d="M4.5 10L8.5 6L12.5 10" fill="none" stroke="#4D6185" stroke-width="2"/></svg>
<div class="a" style="left:171px;top:174px;width:16px;height:17px;border:1px solid #BACBF5;border-radius:2px;background:linear-gradient(135deg,#E4EBFE,#C4D4FC)"></div>
<svg class="a" style="left:171px;top:174px" width="17" height="17" viewBox="0 0 17 17"><path d="M4.5 7L8.5 11L12.5 7" fill="none" stroke="#4D6185" stroke-width="2"/></svg>
<div class="a" style="left:171px;top:147px;width:16px;height:7px;border:1px solid #B4C6F2;border-radius:2px;background:linear-gradient(to bottom,#D6E2FC,#C0D2FA)"></div>
<div style="position:absolute;left:8px;top:190px;width:180px;height:1px;background:#000"></div>
<div style="position:absolute;left:10px;top:191px;width:59px;height:18px;background:#fff;border:1px solid #000;border-top:none"></div>
<div class="t" style="left:19px;top:194px;font-size:11px;line-height:13px;transform:scaleX(0.9244);transform-origin:0 0;">Symbols</div>
<div class="t" style="left:78px;top:194px;font-size:11px;line-height:13px;color:#80806F;transform:scaleX(0.9654);transform-origin:0 0;">Tick Chart</div>
<div style="position:absolute;left:136px;top:195px;width:1px;height:11px;background:#80806F"></div>
<div style="position:absolute;left:7px;top:210px;width:181px;height:1px;background:#ACA899"></div>
<div style="position:absolute;left:4px;top:213px;width:186px;height:1px;background:#FFF"></div>
<div class="a" style="left:7px;top:216px;width:167px;height:13px;background:linear-gradient(to right,#7797E2,#8FACEA 60%,#A6BEF0)"></div>
<div class="t" style="left:10px;top:216px;font-size:11px;line-height:13px;color:#E6EDF9;transform:scaleX(1.0829);transform-origin:0 0;">Navigator</div>
<svg class="a" style="left:179px;top:220px" width="6" height="5" shape-rendering="crispEdges"><path d="M0 0h2v1h-2zM4 0h2v1h-2zM1 1h4v1h-4zM2 2h2v1h-2zM1 3h4v1h-4zM0 4h2v1h-2zM4 4h2v1h-2z" fill="#000"/></svg>
<div style="position:absolute;left:7px;top:230px;width:181px;height:77px;background:#fff;border-top:1px solid #ACA899;border-left:1px solid #ACA899"></div>
<svg class="a" style="left:8px;top:231px" width="163" height="75" shape-rendering="crispEdges"><rect x="13" y="1" width="1" height="1" fill="#888"/><rect x="34" y="1" width="1" height="1" fill="#888"/><rect x="13" y="3" width="1" height="1" fill="#888"/><rect x="34" y="3" width="1" height="1" fill="#888"/><rect x="13" y="5" width="1" height="1" fill="#888"/><rect x="34" y="5" width="1" height="1" fill="#888"/><rect x="13" y="7" width="1" height="1" fill="#888"/><rect x="34" y="7" width="1" height="1" fill="#888"/><rect x="13" y="9" width="1" height="1" fill="#888"/><rect x="34" y="9" width="1" height="1" fill="#888"/><rect x="13" y="11" width="1" height="1" fill="#888"/><rect x="34" y="11" width="1" height="1" fill="#888"/><rect x="13" y="13" width="1" height="1" fill="#888"/><rect x="34" y="13" width="1" height="1" fill="#888"/><rect x="13" y="15" width="1" height="1" fill="#888"/><rect x="34" y="15" width="1" height="1" fill="#888"/><rect x="13" y="17" width="1" height="1" fill="#888"/><rect x="34" y="17" width="1" height="1" fill="#888"/><rect x="13" y="19" width="1" height="1" fill="#888"/><rect x="34" y="19" width="1" height="1" fill="#888"/><rect x="13" y="21" width="1" height="1" fill="#888"/><rect x="34" y="21" width="1" height="1" fill="#888"/><rect x="13" y="23" width="1" height="1" fill="#888"/><rect x="34" y="23" width="1" height="1" fill="#888"/><rect x="13" y="25" width="1" height="1" fill="#888"/><rect x="34" y="25" width="1" height="1" fill="#888"/><rect x="13" y="27" width="1" height="1" fill="#888"/><rect x="34" y="27" width="1" height="1" fill="#888"/><rect x="13" y="29" width="1" height="1" fill="#888"/><rect x="34" y="29" width="1" height="1" fill="#888"/><rect x="13" y="31" width="1" height="1" fill="#888"/><rect x="34" y="31" width="1" height="1" fill="#888"/><rect x="13" y="33" width="1" height="1" fill="#888"/><rect x="34" y="33" width="1" height="1" fill="#888"/><rect x="13" y="35" width="1" height="1" fill="#888"/><rect x="34" y="35" width="1" height="1" fill="#888"/><rect x="13" y="37" width="1" height="1" fill="#888"/><rect x="34" y="37" width="1" height="1" fill="#888"/><rect x="13" y="39" width="1" height="1" fill="#888"/><rect x="34" y="39" width="1" height="1" fill="#888"/><rect x="13" y="41" width="1" height="1" fill="#888"/><rect x="34" y="41" width="1" height="1" fill="#888"/><rect x="13" y="43" width="1" height="1" fill="#888"/><rect x="34" y="43" width="1" height="1" fill="#888"/><rect x="13" y="45" width="1" height="1" fill="#888"/><rect x="34" y="45" width="1" height="1" fill="#888"/><rect x="13" y="47" width="1" height="1" fill="#888"/><rect x="34" y="47" width="1" height="1" fill="#888"/><rect x="13" y="49" width="1" height="1" fill="#888"/><rect x="34" y="49" width="1" height="1" fill="#888"/><rect x="13" y="51" width="1" height="1" fill="#888"/><rect x="34" y="51" width="1" height="1" fill="#888"/><rect x="13" y="53" width="1" height="1" fill="#888"/><rect x="34" y="53" width="1" height="1" fill="#888"/><rect x="13" y="55" width="1" height="1" fill="#888"/><rect x="34" y="55" width="1" height="1" fill="#888"/><rect x="13" y="57" width="1" height="1" fill="#888"/><rect x="34" y="57" width="1" height="1" fill="#888"/><rect x="13" y="59" width="1" height="1" fill="#888"/><rect x="34" y="59" width="1" height="1" fill="#888"/><rect x="13" y="61" width="1" height="1" fill="#888"/><rect x="34" y="61" width="1" height="1" fill="#888"/><rect x="13" y="63" width="1" height="1" fill="#888"/><rect x="34" y="63" width="1" height="1" fill="#888"/><rect x="13" y="65" width="1" height="1" fill="#888"/><rect x="34" y="65" width="1" height="1" fill="#888"/><rect x="13" y="67" width="1" height="1" fill="#888"/><rect x="34" y="67" width="1" height="1" fill="#888"/><rect x="13" y="69" width="1" height="1" fill="#888"/><rect x="34" y="69" width="1" height="1" fill="#888"/><rect x="13" y="71" width="1" height="1" fill="#888"/><rect x="34" y="71" width="1" height="1" fill="#888"/><rect x="13" y="73" width="1" height="1" fill="#888"/><rect x="34" y="73" width="1" height="1" fill="#888"/><rect x="36" y="12" width="1" height="1" fill="#888"/><rect x="38" y="12" width="1" height="1" fill="#888"/><rect x="40" y="12" width="1" height="1" fill="#888"/><rect x="42" y="12" width="1" height="1" fill="#888"/><rect x="44" y="12" width="1" height="1" fill="#888"/><rect x="36" y="30" width="1" height="1" fill="#888"/><rect x="38" y="30" width="1" height="1" fill="#888"/><rect x="40" y="30" width="1" height="1" fill="#888"/><rect x="42" y="30" width="1" height="1" fill="#888"/><rect x="44" y="30" width="1" height="1" fill="#888"/><rect x="36" y="48" width="1" height="1" fill="#888"/><rect x="38" y="48" width="1" height="1" fill="#888"/><rect x="40" y="48" width="1" height="1" fill="#888"/><rect x="42" y="48" width="1" height="1" fill="#888"/><rect x="44" y="48" width="1" height="1" fill="#888"/><rect x="36" y="66" width="1" height="1" fill="#888"/><rect x="38" y="66" width="1" height="1" fill="#888"/><rect x="40" y="66" width="1" height="1" fill="#888"/><rect x="42" y="66" width="1" height="1" fill="#888"/><rect x="44" y="66" width="1" height="1" fill="#888"/></svg>
<svg class="a" style="left:56px;top:234px" width="16" height="16" viewBox="0 0 16 16"><rect x="0.5" y="0.5" width="13.5" height="13.5" rx="2.5" fill="#F2D868" stroke="#B8961E"/><rect x="1.5" y="1.5" width="11.5" height="5" rx="2" fill="#FBEDA8"/><path d="M9.5 3C7.8 2.6 7.2 3.8 6.9 6L6.3 10C6.1 11.3 5.3 11.6 4.3 11.2M5.2 6.2H8.8" stroke="#8A6818" stroke-width="1.3" fill="none"/><path d="M11.5 8L15 11.5L11.5 15L8 11.5Z" fill="#F8E070" stroke="#B8961E"/></svg>
<div class="a" style="left:75px;top:234px;width:96px;height:16px;overflow:hidden">
<div class="t" style="left:2px;top:2px;font-size:11px;line-height:13px;">#KG Support and Resistance</div>
</div>
<svg class="a" style="left:56px;top:252px" width="16" height="16" viewBox="0 0 16 16"><rect x="0.5" y="0.5" width="13.5" height="13.5" rx="2.5" fill="#F2D868" stroke="#B8961E"/><rect x="1.5" y="1.5" width="11.5" height="5" rx="2" fill="#FBEDA8"/><path d="M9.5 3C7.8 2.6 7.2 3.8 6.9 6L6.3 10C6.1 11.3 5.3 11.6 4.3 11.2M5.2 6.2H8.8" stroke="#8A6818" stroke-width="1.3" fill="none"/><path d="M11.5 8L15 11.5L11.5 15L8 11.5Z" fill="#F8E070" stroke="#B8961E"/></svg>
<div class="a" style="left:75px;top:252px;width:96px;height:16px;overflow:hidden">
<div class="t" style="left:2px;top:2px;font-size:11px;line-height:13px;">#Madro1_GoldenLine</div>
</div>
<svg class="a" style="left:56px;top:270px" width="16" height="16" viewBox="0 0 16 16"><rect x="0.5" y="0.5" width="13.5" height="13.5" rx="2.5" fill="#F2D868" stroke="#B8961E"/><rect x="1.5" y="1.5" width="11.5" height="5" rx="2" fill="#FBEDA8"/><path d="M9.5 3C7.8 2.6 7.2 3.8 6.9 6L6.3 10C6.1 11.3 5.3 11.6 4.3 11.2M5.2 6.2H8.8" stroke="#8A6818" stroke-width="1.3" fill="none"/><path d="M11.5 8L15 11.5L11.5 15L8 11.5Z" fill="#F8E070" stroke="#B8961E"/></svg>
<div class="a" style="left:75px;top:270px;width:96px;height:16px;overflow:hidden">
<div class="t" style="left:2px;top:2px;font-size:11px;line-height:13px;">#Pallada_MainSignal</div>
</div>
<svg class="a" style="left:56px;top:288px" width="16" height="16" viewBox="0 0 16 16"><rect x="0.5" y="0.5" width="13.5" height="13.5" rx="2.5" fill="#F2D868" stroke="#B8961E"/><rect x="1.5" y="1.5" width="11.5" height="5" rx="2" fill="#FBEDA8"/><path d="M9.5 3C7.8 2.6 7.2 3.8 6.9 6L6.3 10C6.1 11.3 5.3 11.6 4.3 11.2M5.2 6.2H8.8" stroke="#8A6818" stroke-width="1.3" fill="none"/><path d="M11.5 8L15 11.5L11.5 15L8 11.5Z" fill="#F8E070" stroke="#B8961E"/></svg>
<div class="a" style="left:75px;top:288px;width:96px;height:16px;overflow:hidden">
<div class="t" style="left:2px;top:2px;font-size:11px;line-height:13px;">#SpudFibo</div>
</div>
<div style="position:absolute;left:171px;top:231px;width:16px;height:75px;background:linear-gradient(to right,#F3F1EC,#FEFEFB)"></div>
<div class="a" style="left:171px;top:231px;width:16px;height:17px;border:1px solid #BACBF5;border-radius:2px;background:linear-gradient(135deg,#E4EBFE,#C4D4FC)"></div>
<svg class="a" style="left:171px;top:231px" width="17" height="17" viewBox="0 0 17 17"><path d="M4.5 10L8.5 6L12.5 10" fill="none" stroke="#4D6185" stroke-width="2"/></svg>
<div class="a" style="left:171px;top:289px;width:16px;height:17px;border:1px solid #BACBF5;border-radius:2px;background:linear-gradient(135deg,#E4EBFE,#C4D4FC)"></div>
<svg class="a" style="left:171px;top:289px" width="17" height="17" viewBox="0 0 17 17"><path d="M4.5 7L8.5 11L12.5 7" fill="none" stroke="#4D6185" stroke-width="2"/></svg>
<div class="a" style="left:171px;top:257px;width:16px;height:7px;border:1px solid #B4C6F2;border-radius:2px;background:linear-gradient(to bottom,#D6E2FC,#C0D2FA)"></div>
<div style="position:absolute;left:8px;top:306px;width:180px;height:1px;background:#000"></div>
<div style="position:absolute;left:10px;top:307px;width:60px;height:17px;background:#fff;border:1px solid #000;border-top:none"></div>
<div class="t" style="left:19px;top:310px;font-size:11px;line-height:13px;transform:scaleX(0.9412);transform-origin:0 0;">Common</div>
<div class="t" style="left:80px;top:310px;font-size:11px;line-height:13px;color:#80806F;transform:scaleX(0.9945);transform-origin:0 0;">Favorites</div>
<div style="position:absolute;left:136px;top:311px;width:1px;height:11px;background:#80806F"></div>
<div style="position:absolute;left:193px;top:105px;width:826px;height:1px;background:#5A5850"></div>
<div style="position:absolute;left:193px;top:106px;width:825px;height:202px;background:#000"></div>
<svg class="a" style="left:0;top:0" width="1024" height="546" shape-rendering="crispEdges">
<defs><clipPath id="pc"><rect x="196" y="109" width="782" height="181"/></clipPath></defs>
<g clip-path="url(#pc)">
<rect x="196" y="183" width="782" height="1" fill="#778899"/>
<rect x="196" y="211" width="1" height="22" fill="#00FF00"/>
<rect x="194" y="219" width="5" height="9" fill="#00FF00"/>
<rect x="195" y="220" width="3" height="7" fill="#FFFFFF"/>
<rect x="204" y="221" width="1" height="15" fill="#00FF00"/>
<rect x="202" y="223" width="5" height="4" fill="#00FF00"/>
<rect x="203" y="224" width="3" height="2" fill="#000000"/>
<rect x="212" y="214" width="1" height="16" fill="#00FF00"/>
<rect x="210" y="225" width="5" height="3" fill="#00FF00"/>
<rect x="211" y="226" width="3" height="1" fill="#FFFFFF"/>
<rect x="220" y="216" width="1" height="43" fill="#00FF00"/>
<rect x="218" y="225" width="5" height="33" fill="#00FF00"/>
<rect x="219" y="226" width="3" height="31" fill="#FFFFFF"/>
<rect x="228" y="230" width="1" height="37" fill="#00FF00"/>
<rect x="226" y="235" width="5" height="25" fill="#00FF00"/>
<rect x="227" y="236" width="3" height="23" fill="#000000"/>
<rect x="236" y="198" width="1" height="40" fill="#00FF00"/>
<rect x="234" y="201" width="5" height="37" fill="#00FF00"/>
<rect x="235" y="202" width="3" height="35" fill="#000000"/>
<rect x="244" y="187" width="1" height="46" fill="#00FF00"/>
<rect x="242" y="199" width="5" height="23" fill="#00FF00"/>
<rect x="243" y="200" width="3" height="21" fill="#FFFFFF"/>
<rect x="252" y="189" width="1" height="36" fill="#00FF00"/>
<rect x="250" y="219" width="5" height="3" fill="#00FF00"/>
<rect x="251" y="220" width="3" height="1" fill="#FFFFFF"/>
<rect x="260" y="174" width="1" height="66" fill="#00FF00"/>
<rect x="258" y="174" width="5" height="50" fill="#00FF00"/>
<rect x="259" y="175" width="3" height="48" fill="#000000"/>
<rect x="268" y="149" width="1" height="52" fill="#00FF00"/>
<rect x="266" y="176" width="5" height="3" fill="#00FF00"/>
<rect x="267" y="177" width="3" height="1" fill="#FFFFFF"/>
<rect x="276" y="124" width="1" height="65" fill="#00FF00"/>
<rect x="274" y="133" width="5" height="44" fill="#00FF00"/>
<rect x="275" y="134" width="3" height="42" fill="#000000"/>
<rect x="284" y="135" width="1" height="46" fill="#00FF00"/>
<rect x="282" y="135" width="5" height="33" fill="#00FF00"/>
<rect x="283" y="136" width="3" height="31" fill="#FFFFFF"/>
<rect x="292" y="133" width="1" height="42" fill="#00FF00"/>
<rect x="290" y="158" width="5" height="13" fill="#00FF00"/>
<rect x="291" y="159" width="3" height="11" fill="#000000"/>
<rect x="300" y="153" width="1" height="20" fill="#00FF00"/>
<rect x="298" y="154" width="5" height="4" fill="#00FF00"/>
<rect x="299" y="155" width="3" height="2" fill="#000000"/>
<rect x="308" y="144" width="1" height="64" fill="#00FF00"/>
<rect x="306" y="153" width="5" height="55" fill="#00FF00"/>
<rect x="307" y="154" width="3" height="53" fill="#FFFFFF"/>
<rect x="316" y="192" width="1" height="30" fill="#00FF00"/>
<rect x="314" y="205" width="5" height="4" fill="#00FF00"/>
<rect x="315" y="206" width="3" height="2" fill="#FFFFFF"/>
<rect x="324" y="201" width="1" height="23" fill="#00FF00"/>
<rect x="322" y="207" width="5" height="4" fill="#00FF00"/>
<rect x="323" y="208" width="3" height="2" fill="#000000"/>
<rect x="332" y="190" width="1" height="22" fill="#00FF00"/>
<rect x="330" y="192" width="5" height="20" fill="#00FF00"/>
<rect x="331" y="193" width="3" height="18" fill="#000000"/>
<rect x="340" y="189" width="1" height="21" fill="#00FF00"/>
<rect x="338" y="189" width="5" height="2" fill="#00FF00"/>
<rect x="348" y="187" width="1" height="24" fill="#00FF00"/>
<rect x="346" y="189" width="5" height="20" fill="#00FF00"/>
<rect x="347" y="190" width="3" height="18" fill="#FFFFFF"/>
<rect x="356" y="190" width="1" height="29" fill="#00FF00"/>
<rect x="354" y="201" width="5" height="10" fill="#00FF00"/>
<rect x="355" y="202" width="3" height="8" fill="#000000"/>
<rect x="364" y="197" width="1" height="14" fill="#00FF00"/>
<rect x="362" y="199" width="5" height="7" fill="#00FF00"/>
<rect x="363" y="200" width="3" height="5" fill="#FFFFFF"/>
<rect x="372" y="200" width="1" height="19" fill="#00FF00"/>
<rect x="370" y="208" width="5" height="10" fill="#00FF00"/>
<rect x="371" y="209" width="3" height="8" fill="#FFFFFF"/>
<rect x="380" y="210" width="1" height="13" fill="#00FF00"/>
<rect x="378" y="218" width="5" height="4" fill="#00FF00"/>
<rect x="379" y="219" width="3" height="2" fill="#FFFFFF"/>
<rect x="388" y="211" width="1" height="16" fill="#00FF00"/>
<rect x="386" y="220" width="5" height="6" fill="#00FF00"/>
<rect x="387" y="221" width="3" height="4" fill="#FFFFFF"/>
<rect x="396" y="216" width="1" height="10" fill="#00FF00"/>
<rect x="394" y="221" width="5" height="4" fill="#00FF00"/>
<rect x="395" y="222" width="3" height="2" fill="#000000"/>
<rect x="404" y="211" width="1" height="12" fill="#00FF00"/>
<rect x="402" y="215" width="5" height="6" fill="#00FF00"/>
<rect x="403" y="216" width="3" height="4" fill="#000000"/>
<rect x="412" y="200" width="1" height="18" fill="#00FF00"/>
<rect x="410" y="210" width="5" height="8" fill="#00FF00"/>
<rect x="411" y="211" width="3" height="6" fill="#000000"/>
<rect x="420" y="201" width="1" height="17" fill="#00FF00"/>
<rect x="418" y="208" width="5" height="3" fill="#00FF00"/>
<rect x="419" y="209" width="3" height="1" fill="#FFFFFF"/>
<rect x="428" y="200" width="1" height="11" fill="#00FF00"/>
<rect x="426" y="205" width="5" height="3" fill="#00FF00"/>
<rect x="427" y="206" width="3" height="1" fill="#FFFFFF"/>
<rect x="436" y="197" width="1" height="15" fill="#00FF00"/>
<rect x="434" y="207" width="5" height="3" fill="#00FF00"/>
<rect x="435" y="208" width="3" height="1" fill="#FFFFFF"/>
<rect x="444" y="199" width="1" height="13" fill="#00FF00"/>
<rect x="442" y="207" width="5" height="2" fill="#00FF00"/>
<rect x="452" y="197" width="1" height="14" fill="#00FF00"/>
<rect x="450" y="200" width="5" height="11" fill="#00FF00"/>
<rect x="451" y="201" width="3" height="9" fill="#000000"/>
<rect x="460" y="197" width="1" height="14" fill="#00FF00"/>
<rect x="458" y="203" width="5" height="2" fill="#00FF00"/>
<rect x="468" y="197" width="1" height="14" fill="#00FF00"/>
<rect x="466" y="199" width="5" height="3" fill="#00FF00"/>
<rect x="467" y="200" width="3" height="1" fill="#000000"/>
<rect x="476" y="195" width="1" height="13" fill="#00FF00"/>
<rect x="474" y="198" width="5" height="3" fill="#00FF00"/>
<rect x="475" y="199" width="3" height="1" fill="#000000"/>
<rect x="484" y="199" width="1" height="13" fill="#00FF00"/>
<rect x="482" y="199" width="5" height="3" fill="#00FF00"/>
<rect x="483" y="200" width="3" height="1" fill="#FFFFFF"/>
<rect x="492" y="197" width="1" height="14" fill="#00FF00"/>
<rect x="490" y="199" width="5" height="12" fill="#00FF00"/>
<rect x="491" y="200" width="3" height="10" fill="#FFFFFF"/>
<rect x="500" y="198" width="1" height="17" fill="#00FF00"/>
<rect x="498" y="201" width="5" height="6" fill="#00FF00"/>
<rect x="499" y="202" width="3" height="4" fill="#000000"/>
<rect x="508" y="189" width="1" height="25" fill="#00FF00"/>
<rect x="506" y="203" width="5" height="8" fill="#00FF00"/>
<rect x="507" y="204" width="3" height="6" fill="#FFFFFF"/>
<rect x="516" y="203" width="1" height="12" fill="#00FF00"/>
<rect x="514" y="209" width="5" height="2" fill="#00FF00"/>
<rect x="524" y="207" width="1" height="8" fill="#00FF00"/>
<rect x="522" y="211" width="5" height="4" fill="#00FF00"/>
<rect x="523" y="212" width="3" height="2" fill="#FFFFFF"/>
<rect x="532" y="200" width="1" height="17" fill="#00FF00"/>
<rect x="530" y="210" width="5" height="3" fill="#00FF00"/>
<rect x="531" y="211" width="3" height="1" fill="#000000"/>
<rect x="540" y="210" width="1" height="10" fill="#00FF00"/>
<rect x="538" y="211" width="5" height="6" fill="#00FF00"/>
<rect x="539" y="212" width="3" height="4" fill="#FFFFFF"/>
<rect x="548" y="212" width="1" height="15" fill="#00FF00"/>
<rect x="546" y="220" width="5" height="2" fill="#00FF00"/>
<rect x="556" y="204" width="1" height="16" fill="#00FF00"/>
<rect x="554" y="206" width="5" height="14" fill="#00FF00"/>
<rect x="555" y="207" width="3" height="12" fill="#000000"/>
<rect x="564" y="195" width="1" height="19" fill="#00FF00"/>
<rect x="562" y="202" width="5" height="2" fill="#00FF00"/>
<rect x="572" y="188" width="1" height="12" fill="#00FF00"/>
<rect x="570" y="196" width="5" height="3" fill="#00FF00"/>
<rect x="571" y="197" width="3" height="1" fill="#000000"/>
<rect x="580" y="194" width="1" height="10" fill="#00FF00"/>
<rect x="578" y="196" width="5" height="4" fill="#00FF00"/>
<rect x="579" y="197" width="3" height="2" fill="#000000"/>
<rect x="588" y="188" width="1" height="18" fill="#00FF00"/>
<rect x="586" y="192" width="5" height="8" fill="#00FF00"/>
<rect x="587" y="193" width="3" height="6" fill="#FFFFFF"/>
<rect x="596" y="191" width="1" height="13" fill="#00FF00"/>
<rect x="594" y="192" width="5" height="8" fill="#00FF00"/>
<rect x="595" y="193" width="3" height="6" fill="#000000"/>
<rect x="604" y="188" width="1" height="20" fill="#00FF00"/>
<rect x="602" y="190" width="5" height="15" fill="#00FF00"/>
<rect x="603" y="191" width="3" height="13" fill="#FFFFFF"/>
<rect x="612" y="187" width="1" height="24" fill="#00FF00"/>
<rect x="610" y="189" width="5" height="15" fill="#00FF00"/>
<rect x="611" y="190" width="3" height="13" fill="#000000"/>
<rect x="620" y="190" width="1" height="13" fill="#00FF00"/>
<rect x="618" y="192" width="5" height="9" fill="#00FF00"/>
<rect x="619" y="193" width="3" height="7" fill="#FFFFFF"/>
<rect x="628" y="195" width="1" height="8" fill="#00FF00"/>
<rect x="626" y="199" width="5" height="4" fill="#00FF00"/>
<rect x="627" y="200" width="3" height="2" fill="#000000"/>
<rect x="636" y="186" width="1" height="21" fill="#00FF00"/>
<rect x="634" y="190" width="5" height="13" fill="#00FF00"/>
<rect x="635" y="191" width="3" height="11" fill="#000000"/>
<rect x="644" y="189" width="1" height="9" fill="#00FF00"/>
<rect x="642" y="190" width="5" height="5" fill="#00FF00"/>
<rect x="643" y="191" width="3" height="3" fill="#FFFFFF"/>
<rect x="652" y="193" width="1" height="9" fill="#00FF00"/>
<rect x="650" y="193" width="5" height="3" fill="#00FF00"/>
<rect x="651" y="194" width="3" height="1" fill="#000000"/>
<rect x="660" y="182" width="1" height="11" fill="#00FF00"/>
<rect x="658" y="187" width="5" height="6" fill="#00FF00"/>
<rect x="659" y="188" width="3" height="4" fill="#000000"/>
<rect x="668" y="184" width="1" height="9" fill="#00FF00"/>
<rect x="666" y="190" width="5" height="2" fill="#00FF00"/>
<rect x="676" y="184" width="1" height="11" fill="#00FF00"/>
<rect x="674" y="185" width="5" height="6" fill="#00FF00"/>
<rect x="675" y="186" width="3" height="4" fill="#000000"/>
<rect x="684" y="180" width="1" height="11" fill="#00FF00"/>
<rect x="682" y="181" width="5" height="7" fill="#00FF00"/>
<rect x="683" y="182" width="3" height="5" fill="#000000"/>
<rect x="692" y="160" width="1" height="24" fill="#00FF00"/>
<rect x="690" y="160" width="5" height="22" fill="#00FF00"/>
<rect x="691" y="161" width="3" height="20" fill="#000000"/>
<rect x="700" y="154" width="1" height="18" fill="#00FF00"/>
<rect x="698" y="163" width="5" height="7" fill="#00FF00"/>
<rect x="699" y="164" width="3" height="5" fill="#FFFFFF"/>
<rect x="708" y="152" width="1" height="16" fill="#00FF00"/>
<rect x="706" y="158" width="5" height="10" fill="#00FF00"/>
<rect x="707" y="159" width="3" height="8" fill="#000000"/>
<rect x="716" y="158" width="1" height="12" fill="#00FF00"/>
<rect x="714" y="160" width="5" height="6" fill="#00FF00"/>
<rect x="715" y="161" width="3" height="4" fill="#FFFFFF"/>
<rect x="724" y="156" width="1" height="15" fill="#00FF00"/>
<rect x="722" y="158" width="5" height="11" fill="#00FF00"/>
<rect x="723" y="159" width="3" height="9" fill="#000000"/>
<rect x="732" y="156" width="1" height="10" fill="#00FF00"/>
<rect x="730" y="156" width="5" height="10" fill="#00FF00"/>
<rect x="731" y="157" width="3" height="8" fill="#FFFFFF"/>
<rect x="740" y="162" width="1" height="12" fill="#00FF00"/>
<rect x="738" y="163" width="5" height="9" fill="#00FF00"/>
<rect x="739" y="164" width="3" height="7" fill="#FFFFFF"/>
<rect x="748" y="165" width="1" height="12" fill="#00FF00"/>
<rect x="746" y="167" width="5" height="8" fill="#00FF00"/>
<rect x="747" y="168" width="3" height="6" fill="#000000"/>
<rect x="756" y="167" width="1" height="17" fill="#00FF00"/>
<rect x="754" y="172" width="5" height="7" fill="#00FF00"/>
<rect x="755" y="173" width="3" height="5" fill="#FFFFFF"/>
<rect x="764" y="174" width="1" height="12" fill="#00FF00"/>
<rect x="762" y="174" width="5" height="3" fill="#00FF00"/>
<rect x="763" y="175" width="3" height="1" fill="#000000"/>
<rect x="772" y="174" width="1" height="13" fill="#00FF00"/>
<rect x="770" y="176" width="5" height="6" fill="#00FF00"/>
<rect x="771" y="177" width="3" height="4" fill="#FFFFFF"/>
<rect x="780" y="176" width="1" height="15" fill="#00FF00"/>
<rect x="778" y="180" width="5" height="11" fill="#00FF00"/>
<rect x="779" y="181" width="3" height="9" fill="#FFFFFF"/>
<rect x="788" y="185" width="1" height="28" fill="#00FF00"/>
<rect x="786" y="187" width="5" height="26" fill="#00FF00"/>
<rect x="787" y="188" width="3" height="24" fill="#FFFFFF"/>
<rect x="796" y="205" width="1" height="21" fill="#00FF00"/>
<rect x="794" y="210" width="5" height="8" fill="#00FF00"/>
<rect x="795" y="211" width="3" height="6" fill="#FFFFFF"/>
<rect x="804" y="199" width="1" height="28" fill="#00FF00"/>
<rect x="802" y="220" width="5" height="4" fill="#00FF00"/>
<rect x="803" y="221" width="3" height="2" fill="#FFFFFF"/>
<rect x="812" y="215" width="1" height="34" fill="#00FF00"/>
<rect x="810" y="221" width="5" height="2" fill="#00FF00"/>
<rect x="820" y="194" width="1" height="46" fill="#00FF00"/>
<rect x="818" y="220" width="5" height="11" fill="#00FF00"/>
<rect x="819" y="221" width="3" height="9" fill="#FFFFFF"/>
<rect x="828" y="228" width="1" height="50" fill="#00FF00"/>
<rect x="826" y="229" width="5" height="43" fill="#00FF00"/>
<rect x="827" y="230" width="3" height="41" fill="#FFFFFF"/>
<rect x="836" y="248" width="1" height="25" fill="#00FF00"/>
<rect x="834" y="257" width="5" height="14" fill="#00FF00"/>
<rect x="835" y="258" width="3" height="12" fill="#000000"/>
<rect x="844" y="230" width="1" height="30" fill="#00FF00"/>
<rect x="842" y="246" width="5" height="14" fill="#00FF00"/>
<rect x="843" y="247" width="3" height="12" fill="#000000"/>
<rect x="852" y="225" width="1" height="22" fill="#00FF00"/>
<rect x="850" y="225" width="5" height="22" fill="#00FF00"/>
<rect x="851" y="226" width="3" height="20" fill="#000000"/>
<rect x="860" y="217" width="1" height="30" fill="#00FF00"/>
<rect x="858" y="222" width="5" height="2" fill="#00FF00"/>
<rect x="868" y="216" width="1" height="24" fill="#00FF00"/>
<rect x="866" y="222" width="5" height="13" fill="#00FF00"/>
<rect x="867" y="223" width="3" height="11" fill="#FFFFFF"/>
<rect x="876" y="184" width="1" height="50" fill="#00FF00"/>
<rect x="874" y="190" width="5" height="44" fill="#00FF00"/>
<rect x="875" y="191" width="3" height="42" fill="#000000"/>
<rect x="884" y="144" width="1" height="50" fill="#00FF00"/>
<rect x="882" y="152" width="5" height="36" fill="#00FF00"/>
<rect x="883" y="153" width="3" height="34" fill="#000000"/>
<rect x="892" y="146" width="1" height="46" fill="#00FF00"/>
<rect x="890" y="150" width="5" height="38" fill="#00FF00"/>
<rect x="891" y="151" width="3" height="36" fill="#FFFFFF"/>
<rect x="900" y="176" width="1" height="18" fill="#00FF00"/>
<rect x="898" y="185" width="5" height="6" fill="#00FF00"/>
<rect x="899" y="186" width="3" height="4" fill="#000000"/>
<rect x="908" y="174" width="1" height="44" fill="#00FF00"/>
<rect x="906" y="184" width="5" height="33" fill="#00FF00"/>
<rect x="907" y="185" width="3" height="31" fill="#FFFFFF"/>
<rect x="916" y="201" width="1" height="23" fill="#00FF00"/>
<rect x="914" y="207" width="5" height="11" fill="#00FF00"/>
<rect x="915" y="208" width="3" height="9" fill="#000000"/>
<rect x="924" y="198" width="1" height="20" fill="#00FF00"/>
<rect x="922" y="210" width="5" height="2" fill="#00FF00"/>
<rect x="932" y="209" width="1" height="23" fill="#00FF00"/>
<rect x="930" y="212" width="5" height="8" fill="#00FF00"/>
<rect x="931" y="213" width="3" height="6" fill="#FFFFFF"/>
<rect x="940" y="190" width="1" height="42" fill="#00FF00"/>
<rect x="938" y="203" width="5" height="19" fill="#00FF00"/>
<rect x="939" y="204" width="3" height="17" fill="#000000"/>
<rect x="948" y="187" width="1" height="24" fill="#00FF00"/>
<rect x="946" y="202" width="5" height="6" fill="#00FF00"/>
<rect x="947" y="203" width="3" height="4" fill="#FFFFFF"/>
<rect x="956" y="169" width="1" height="37" fill="#00FF00"/>
<rect x="954" y="183" width="5" height="23" fill="#00FF00"/>
<rect x="955" y="184" width="3" height="21" fill="#000000"/>
<rect x="274" y="123" width="2" height="2" fill="#0000FF"/>
<rect x="282" y="123" width="2" height="2" fill="#0000FF"/>
<rect x="290" y="123" width="2" height="2" fill="#0000FF"/>
<rect x="298" y="123" width="2" height="2" fill="#0000FF"/>
<rect x="306" y="123" width="2" height="2" fill="#0000FF"/>
<rect x="314" y="123" width="2" height="2" fill="#0000FF"/>
<rect x="322" y="123" width="2" height="2" fill="#0000FF"/>
<rect x="330" y="123" width="2" height="2" fill="#0000FF"/>
<rect x="338" y="123" width="2" height="2" fill="#0000FF"/>
<rect x="346" y="123" width="2" height="2" fill="#0000FF"/>
<rect x="354" y="123" width="2" height="2" fill="#0000FF"/>
<rect x="362" y="123" width="2" height="2" fill="#0000FF"/>
<rect x="370" y="123" width="2" height="2" fill="#0000FF"/>
<rect x="378" y="123" width="2" height="2" fill="#0000FF"/>
<rect x="386" y="123" width="2" height="2" fill="#0000FF"/>
<rect x="394" y="123" width="2" height="2" fill="#0000FF"/>
<rect x="402" y="123" width="2" height="2" fill="#0000FF"/>
<rect x="410" y="123" width="2" height="2" fill="#0000FF"/>
<rect x="418" y="123" width="2" height="2" fill="#0000FF"/>
<rect x="426" y="123" width="2" height="2" fill="#0000FF"/>
<rect x="434" y="123" width="2" height="2" fill="#0000FF"/>
<rect x="442" y="123" width="2" height="2" fill="#0000FF"/>
<rect x="450" y="123" width="2" height="2" fill="#0000FF"/>
<rect x="458" y="123" width="2" height="2" fill="#0000FF"/>
<rect x="466" y="123" width="2" height="2" fill="#0000FF"/>
<rect x="474" y="123" width="2" height="2" fill="#0000FF"/>
<rect x="482" y="123" width="2" height="2" fill="#0000FF"/>
<rect x="490" y="123" width="2" height="2" fill="#0000FF"/>
<rect x="498" y="123" width="2" height="2" fill="#0000FF"/>
<rect x="506" y="123" width="2" height="2" fill="#0000FF"/>
<rect x="514" y="123" width="2" height="2" fill="#0000FF"/>
<rect x="522" y="123" width="2" height="2" fill="#0000FF"/>
<rect x="530" y="123" width="2" height="2" fill="#0000FF"/>
<rect x="538" y="123" width="2" height="2" fill="#0000FF"/>
<rect x="546" y="123" width="2" height="2" fill="#0000FF"/>
<rect x="554" y="123" width="2" height="2" fill="#0000FF"/>
<rect x="562" y="123" width="2" height="2" fill="#0000FF"/>
<rect x="570" y="123" width="2" height="2" fill="#0000FF"/>
<rect x="578" y="123" width="2" height="2" fill="#0000FF"/>
<rect x="586" y="123" width="2" height="2" fill="#0000FF"/>
<rect x="594" y="123" width="2" height="2" fill="#0000FF"/>
<rect x="602" y="123" width="2" height="2" fill="#0000FF"/>
<rect x="610" y="123" width="2" height="2" fill="#0000FF"/>
<rect x="618" y="123" width="2" height="2" fill="#0000FF"/>
<rect x="626" y="123" width="2" height="2" fill="#0000FF"/>
<rect x="634" y="123" width="2" height="2" fill="#0000FF"/>
<rect x="642" y="123" width="2" height="2" fill="#0000FF"/>
<rect x="650" y="123" width="2" height="2" fill="#0000FF"/>
<rect x="658" y="123" width="2" height="2" fill="#0000FF"/>
<rect x="666" y="123" width="2" height="2" fill="#0000FF"/>
<rect x="674" y="123" width="2" height="2" fill="#0000FF"/>
<rect x="682" y="123" width="2" height="2" fill="#0000FF"/>
<rect x="690" y="123" width="2" height="2" fill="#0000FF"/>
<rect x="698" y="123" width="2" height="2" fill="#0000FF"/>
<rect x="706" y="123" width="2" height="2" fill="#0000FF"/>
<rect x="714" y="123" width="2" height="2" fill="#0000FF"/>
<rect x="722" y="123" width="2" height="2" fill="#0000FF"/>
<rect x="730" y="123" width="2" height="2" fill="#0000FF"/>
<rect x="738" y="123" width="2" height="2" fill="#0000FF"/>
<rect x="746" y="123" width="2" height="2" fill="#0000FF"/>
<rect x="754" y="123" width="2" height="2" fill="#0000FF"/>
<rect x="762" y="123" width="2" height="2" fill="#0000FF"/>
<rect x="770" y="123" width="2" height="2" fill="#0000FF"/>
<rect x="778" y="123" width="2" height="2" fill="#0000FF"/>
<rect x="786" y="123" width="2" height="2" fill="#0000FF"/>
<rect x="794" y="123" width="2" height="2" fill="#0000FF"/>
<rect x="802" y="123" width="2" height="2" fill="#0000FF"/>
<rect x="810" y="123" width="2" height="2" fill="#0000FF"/>
<rect x="818" y="123" width="2" height="2" fill="#0000FF"/>
<rect x="826" y="123" width="2" height="2" fill="#0000FF"/>
<rect x="834" y="123" width="2" height="2" fill="#0000FF"/>
<rect x="842" y="123" width="2" height="2" fill="#0000FF"/>
<rect x="850" y="123" width="2" height="2" fill="#0000FF"/>
<rect x="858" y="123" width="2" height="2" fill="#0000FF"/>
<rect x="866" y="123" width="2" height="2" fill="#0000FF"/>
<rect x="874" y="123" width="2" height="2" fill="#0000FF"/>
<rect x="882" y="123" width="2" height="2" fill="#0000FF"/>
<rect x="890" y="123" width="2" height="2" fill="#0000FF"/>
<rect x="898" y="123" width="2" height="2" fill="#0000FF"/>
<rect x="906" y="123" width="2" height="2" fill="#0000FF"/>
<rect x="914" y="123" width="2" height="2" fill="#0000FF"/>
<rect x="922" y="123" width="2" height="2" fill="#0000FF"/>
<rect x="930" y="123" width="2" height="2" fill="#0000FF"/>
<rect x="938" y="123" width="2" height="2" fill="#0000FF"/>
<rect x="946" y="123" width="2" height="2" fill="#0000FF"/>
<rect x="954" y="123" width="2" height="2" fill="#0000FF"/>
<rect x="202" y="200" width="2" height="2" fill="#0000FF"/>
<rect x="210" y="200" width="2" height="2" fill="#0000FF"/>
<rect x="218" y="200" width="2" height="2" fill="#0000FF"/>
<rect x="226" y="200" width="2" height="2" fill="#0000FF"/>
<rect x="234" y="200" width="2" height="2" fill="#0000FF"/>
<rect x="242" y="200" width="2" height="2" fill="#0000FF"/>
<rect x="250" y="200" width="2" height="2" fill="#0000FF"/>
<rect x="258" y="200" width="2" height="2" fill="#0000FF"/>
<rect x="266" y="200" width="2" height="2" fill="#0000FF"/>
<rect x="202" y="209" width="2" height="2" fill="#FFFF00"/>
<rect x="210" y="209" width="2" height="2" fill="#FFFF00"/>
<rect x="218" y="209" width="2" height="2" fill="#FFFF00"/>
<rect x="226" y="209" width="2" height="2" fill="#FFFF00"/>
<rect x="234" y="209" width="2" height="2" fill="#FFFF00"/>
<rect x="242" y="209" width="2" height="2" fill="#FFFF00"/>
<rect x="250" y="209" width="2" height="2" fill="#FFFF00"/>
<rect x="258" y="209" width="2" height="2" fill="#FFFF00"/>
<rect x="266" y="209" width="2" height="2" fill="#FFFF00"/>
<rect x="258" y="238" width="2" height="2" fill="#FFFF00"/>
<rect x="266" y="238" width="2" height="2" fill="#FFFF00"/>
<rect x="274" y="238" width="2" height="2" fill="#FFFF00"/>
<rect x="282" y="238" width="2" height="2" fill="#FFFF00"/>
<rect x="290" y="238" width="2" height="2" fill="#FFFF00"/>
<rect x="298" y="238" width="2" height="2" fill="#FFFF00"/>
<rect x="306" y="238" width="2" height="2" fill="#FFFF00"/>
<rect x="314" y="238" width="2" height="2" fill="#FFFF00"/>
<rect x="226" y="265" width="2" height="2" fill="#FFFF00"/>
<rect x="234" y="265" width="2" height="2" fill="#FFFF00"/>
<rect x="242" y="265" width="2" height="2" fill="#FFFF00"/>
<rect x="250" y="265" width="2" height="2" fill="#FFFF00"/>
<rect x="202" y="269" width="2" height="2" fill="#FFFF00"/>
<rect x="210" y="269" width="2" height="2" fill="#FFFF00"/>
<rect x="218" y="269" width="2" height="2" fill="#FFFF00"/>
<rect x="346" y="186" width="2" height="2" fill="#FFFF00"/>
<rect x="354" y="186" width="2" height="2" fill="#FFFF00"/>
<rect x="362" y="186" width="2" height="2" fill="#FFFF00"/>
<rect x="370" y="186" width="2" height="2" fill="#FFFF00"/>
<rect x="378" y="186" width="2" height="2" fill="#FFFF00"/>
<rect x="386" y="186" width="2" height="2" fill="#FFFF00"/>
<rect x="394" y="186" width="2" height="2" fill="#FFFF00"/>
<rect x="402" y="186" width="2" height="2" fill="#FFFF00"/>
<rect x="410" y="186" width="2" height="2" fill="#FFFF00"/>
<rect x="418" y="186" width="2" height="2" fill="#FFFF00"/>
<rect x="426" y="186" width="2" height="2" fill="#FFFF00"/>
<rect x="322" y="222" width="2" height="2" fill="#FFFF00"/>
<rect x="330" y="222" width="2" height="2" fill="#FFFF00"/>
<rect x="338" y="222" width="2" height="2" fill="#FFFF00"/>
<rect x="346" y="222" width="2" height="2" fill="#FFFF00"/>
<rect x="354" y="222" width="2" height="2" fill="#FFFF00"/>
<rect x="362" y="222" width="2" height="2" fill="#FFFF00"/>
<rect x="370" y="222" width="2" height="2" fill="#FFFF00"/>
<rect x="378" y="222" width="2" height="2" fill="#FFFF00"/>
<rect x="434" y="197" width="2" height="2" fill="#FFFF00"/>
<rect x="442" y="197" width="2" height="2" fill="#FFFF00"/>
<rect x="450" y="197" width="2" height="2" fill="#FFFF00"/>
<rect x="458" y="197" width="2" height="2" fill="#FFFF00"/>
<rect x="466" y="197" width="2" height="2" fill="#FFFF00"/>
<rect x="474" y="197" width="2" height="2" fill="#FFFF00"/>
<rect x="482" y="197" width="2" height="2" fill="#FFFF00"/>
<rect x="490" y="197" width="2" height="2" fill="#FFFF00"/>
<rect x="498" y="197" width="2" height="2" fill="#FFFF00"/>
<rect x="506" y="189" width="2" height="2" fill="#FFFF00"/>
<rect x="514" y="189" width="2" height="2" fill="#FFFF00"/>
<rect x="522" y="189" width="2" height="2" fill="#FFFF00"/>
<rect x="530" y="200" width="2" height="2" fill="#FFFF00"/>
<rect x="538" y="200" width="2" height="2" fill="#FFFF00"/>
<rect x="546" y="200" width="2" height="2" fill="#FFFF00"/>
<rect x="554" y="200" width="2" height="2" fill="#FFFF00"/>
<rect x="562" y="200" width="2" height="2" fill="#FFFF00"/>
<rect x="570" y="200" width="2" height="2" fill="#FFFF00"/>
<rect x="578" y="200" width="2" height="2" fill="#FFFF00"/>
<rect x="586" y="200" width="2" height="2" fill="#FFFF00"/>
<rect x="594" y="200" width="2" height="2" fill="#FFFF00"/>
<rect x="610" y="186" width="2" height="2" fill="#FFFF00"/>
<rect x="618" y="186" width="2" height="2" fill="#FFFF00"/>
<rect x="626" y="186" width="2" height="2" fill="#FFFF00"/>
<rect x="634" y="186" width="2" height="2" fill="#FFFF00"/>
<rect x="642" y="186" width="2" height="2" fill="#FFFF00"/>
<rect x="650" y="186" width="2" height="2" fill="#FFFF00"/>
<rect x="610" y="211" width="2" height="2" fill="#FFFF00"/>
<rect x="618" y="211" width="2" height="2" fill="#FFFF00"/>
<rect x="626" y="211" width="2" height="2" fill="#FFFF00"/>
<rect x="634" y="204" width="2" height="2" fill="#FFFF00"/>
<rect x="642" y="204" width="2" height="2" fill="#FFFF00"/>
<rect x="650" y="204" width="2" height="2" fill="#FFFF00"/>
<rect x="658" y="204" width="2" height="2" fill="#FFFF00"/>
<rect x="666" y="204" width="2" height="2" fill="#FFFF00"/>
<rect x="658" y="182" width="2" height="2" fill="#FFFF00"/>
<rect x="666" y="182" width="2" height="2" fill="#FFFF00"/>
<rect x="674" y="182" width="2" height="2" fill="#FFFF00"/>
<rect x="682" y="182" width="2" height="2" fill="#FFFF00"/>
<rect x="690" y="182" width="2" height="2" fill="#FFFF00"/>
<rect x="698" y="182" width="2" height="2" fill="#FFFF00"/>
<rect x="674" y="193" width="2" height="2" fill="#FFFF00"/>
<rect x="682" y="193" width="2" height="2" fill="#FFFF00"/>
<rect x="690" y="193" width="2" height="2" fill="#FFFF00"/>
<rect x="698" y="193" width="2" height="2" fill="#FFFF00"/>
<rect x="706" y="193" width="2" height="2" fill="#FFFF00"/>
<rect x="714" y="193" width="2" height="2" fill="#FFFF00"/>
<rect x="722" y="193" width="2" height="2" fill="#FFFF00"/>
<rect x="730" y="193" width="2" height="2" fill="#FFFF00"/>
<rect x="738" y="193" width="2" height="2" fill="#FFFF00"/>
<rect x="746" y="193" width="2" height="2" fill="#FFFF00"/>
<rect x="754" y="193" width="2" height="2" fill="#FFFF00"/>
<rect x="762" y="193" width="2" height="2" fill="#FFFF00"/>
<rect x="770" y="193" width="2" height="2" fill="#FFFF00"/>
<rect x="778" y="193" width="2" height="2" fill="#FFFF00"/>
<rect x="786" y="193" width="2" height="2" fill="#FFFF00"/>
<rect x="794" y="193" width="2" height="2" fill="#FFFF00"/>
<rect x="802" y="193" width="2" height="2" fill="#FFFF00"/>
<rect x="810" y="193" width="2" height="2" fill="#FFFF00"/>
<rect x="818" y="193" width="2" height="2" fill="#FFFF00"/>
<rect x="826" y="193" width="2" height="2" fill="#FFFF00"/>
<rect x="834" y="193" width="2" height="2" fill="#FFFF00"/>
<rect x="842" y="193" width="2" height="2" fill="#FFFF00"/>
<rect x="850" y="193" width="2" height="2" fill="#FFFF00"/>
<rect x="858" y="193" width="2" height="2" fill="#FFFF00"/>
<rect x="866" y="193" width="2" height="2" fill="#FFFF00"/>
<rect x="874" y="193" width="2" height="2" fill="#FFFF00"/>
<rect x="730" y="155" width="2" height="2" fill="#FFFF00"/>
<rect x="738" y="155" width="2" height="2" fill="#FFFF00"/>
<rect x="746" y="155" width="2" height="2" fill="#FFFF00"/>
<rect x="754" y="155" width="2" height="2" fill="#FFFF00"/>
<rect x="762" y="155" width="2" height="2" fill="#FFFF00"/>
<rect x="770" y="155" width="2" height="2" fill="#FFFF00"/>
<rect x="778" y="155" width="2" height="2" fill="#FFFF00"/>
<rect x="786" y="155" width="2" height="2" fill="#FFFF00"/>
<rect x="794" y="155" width="2" height="2" fill="#FFFF00"/>
<rect x="802" y="155" width="2" height="2" fill="#FFFF00"/>
<rect x="810" y="155" width="2" height="2" fill="#FFFF00"/>
<rect x="882" y="143" width="2" height="2" fill="#FFFF00"/>
<rect x="890" y="143" width="2" height="2" fill="#FFFF00"/>
<rect x="898" y="143" width="2" height="2" fill="#FFFF00"/>
<rect x="906" y="143" width="2" height="2" fill="#FFFF00"/>
<rect x="914" y="143" width="2" height="2" fill="#FFFF00"/>
<rect x="922" y="143" width="2" height="2" fill="#FFFF00"/>
<rect x="930" y="143" width="2" height="2" fill="#FFFF00"/>
<rect x="938" y="143" width="2" height="2" fill="#FFFF00"/>
<rect x="946" y="143" width="2" height="2" fill="#FFFF00"/>
<rect x="954" y="143" width="2" height="2" fill="#FFFF00"/>
<rect x="930" y="231" width="2" height="2" fill="#FFFF00"/>
<rect x="938" y="231" width="2" height="2" fill="#FFFF00"/>
<rect x="946" y="231" width="2" height="2" fill="#FFFF00"/>
<rect x="954" y="231" width="2" height="2" fill="#FFFF00"/>
<rect x="202" y="278" width="2" height="2" fill="#00FF00"/>
<rect x="210" y="278" width="2" height="2" fill="#00FF00"/>
<rect x="218" y="278" width="2" height="2" fill="#00FF00"/>
<rect x="226" y="278" width="2" height="2" fill="#00FF00"/>
<rect x="234" y="278" width="2" height="2" fill="#00FF00"/>
<rect x="242" y="278" width="2" height="2" fill="#00FF00"/>
<rect x="250" y="278" width="2" height="2" fill="#00FF00"/>
<rect x="258" y="278" width="2" height="2" fill="#00FF00"/>
<rect x="266" y="278" width="2" height="2" fill="#00FF00"/>
<rect x="386" y="225" width="2" height="2" fill="#00FF00"/>
<rect x="394" y="225" width="2" height="2" fill="#00FF00"/>
<rect x="402" y="225" width="2" height="2" fill="#00FF00"/>
<rect x="410" y="225" width="2" height="2" fill="#00FF00"/>
<rect x="418" y="225" width="2" height="2" fill="#00FF00"/>
<rect x="426" y="225" width="2" height="2" fill="#00FF00"/>
<rect x="434" y="225" width="2" height="2" fill="#00FF00"/>
<rect x="442" y="225" width="2" height="2" fill="#00FF00"/>
<rect x="450" y="225" width="2" height="2" fill="#00FF00"/>
<rect x="458" y="225" width="2" height="2" fill="#00FF00"/>
<rect x="466" y="225" width="2" height="2" fill="#00FF00"/>
<rect x="474" y="225" width="2" height="2" fill="#00FF00"/>
<rect x="482" y="225" width="2" height="2" fill="#00FF00"/>
<rect x="490" y="225" width="2" height="2" fill="#00FF00"/>
<rect x="498" y="225" width="2" height="2" fill="#00FF00"/>
<rect x="506" y="225" width="2" height="2" fill="#00FF00"/>
<rect x="514" y="225" width="2" height="2" fill="#00FF00"/>
<rect x="522" y="225" width="2" height="2" fill="#00FF00"/>
<rect x="530" y="225" width="2" height="2" fill="#00FF00"/>
<rect x="538" y="225" width="2" height="2" fill="#00FF00"/>
<rect x="546" y="225" width="2" height="2" fill="#00FF00"/>
<rect x="554" y="225" width="2" height="2" fill="#00FF00"/>
<rect x="562" y="225" width="2" height="2" fill="#00FF00"/>
<rect x="570" y="225" width="2" height="2" fill="#00FF00"/>
<rect x="578" y="225" width="2" height="2" fill="#00FF00"/>
<rect x="586" y="225" width="2" height="2" fill="#00FF00"/>
<rect x="594" y="225" width="2" height="2" fill="#00FF00"/>
<rect x="602" y="225" width="2" height="2" fill="#00FF00"/>
<rect x="610" y="225" width="2" height="2" fill="#00FF00"/>
<rect x="618" y="225" width="2" height="2" fill="#00FF00"/>
<rect x="626" y="225" width="2" height="2" fill="#00FF00"/>
<rect x="634" y="225" width="2" height="2" fill="#00FF00"/>
<rect x="642" y="225" width="2" height="2" fill="#00FF00"/>
<rect x="650" y="225" width="2" height="2" fill="#00FF00"/>
<rect x="658" y="225" width="2" height="2" fill="#00FF00"/>
<rect x="666" y="225" width="2" height="2" fill="#00FF00"/>
<rect x="674" y="225" width="2" height="2" fill="#00FF00"/>
<rect x="682" y="225" width="2" height="2" fill="#00FF00"/>
<rect x="690" y="225" width="2" height="2" fill="#00FF00"/>
<rect x="698" y="225" width="2" height="2" fill="#00FF00"/>
<rect x="706" y="225" width="2" height="2" fill="#00FF00"/>
<rect x="714" y="225" width="2" height="2" fill="#00FF00"/>
<rect x="722" y="225" width="2" height="2" fill="#00FF00"/>
<rect x="730" y="225" width="2" height="2" fill="#00FF00"/>
<rect x="738" y="225" width="2" height="2" fill="#00FF00"/>
<rect x="746" y="225" width="2" height="2" fill="#00FF00"/>
<rect x="754" y="225" width="2" height="2" fill="#00FF00"/>
<rect x="762" y="225" width="2" height="2" fill="#00FF00"/>
<rect x="770" y="225" width="2" height="2" fill="#00FF00"/>
<rect x="778" y="225" width="2" height="2" fill="#00FF00"/>
<rect x="786" y="225" width="2" height="2" fill="#00FF00"/>
<rect x="794" y="225" width="2" height="2" fill="#00FF00"/>
<rect x="706" y="152" width="2" height="2" fill="#00FF00"/>
<rect x="714" y="152" width="2" height="2" fill="#00FF00"/>
<rect x="722" y="152" width="2" height="2" fill="#00FF00"/>
<rect x="730" y="152" width="2" height="2" fill="#00FF00"/>
<rect x="738" y="152" width="2" height="2" fill="#00FF00"/>
<rect x="746" y="152" width="2" height="2" fill="#00FF00"/>
<rect x="754" y="152" width="2" height="2" fill="#00FF00"/>
<rect x="762" y="152" width="2" height="2" fill="#00FF00"/>
<rect x="770" y="152" width="2" height="2" fill="#00FF00"/>
<rect x="778" y="152" width="2" height="2" fill="#00FF00"/>
<rect x="786" y="152" width="2" height="2" fill="#00FF00"/>
<rect x="794" y="152" width="2" height="2" fill="#00FF00"/>
<rect x="802" y="152" width="2" height="2" fill="#00FF00"/>
<rect x="810" y="152" width="2" height="2" fill="#00FF00"/>
<rect x="818" y="152" width="2" height="2" fill="#00FF00"/>
<rect x="826" y="152" width="2" height="2" fill="#00FF00"/>
<rect x="834" y="152" width="2" height="2" fill="#00FF00"/>
<rect x="842" y="152" width="2" height="2" fill="#00FF00"/>
<rect x="850" y="152" width="2" height="2" fill="#00FF00"/>
<rect x="858" y="152" width="2" height="2" fill="#00FF00"/>
<rect x="866" y="152" width="2" height="2" fill="#00FF00"/>
<rect x="874" y="152" width="2" height="2" fill="#00FF00"/>
<rect x="882" y="152" width="2" height="2" fill="#00FF00"/>
<rect x="890" y="152" width="2" height="2" fill="#00FF00"/>
<rect x="898" y="152" width="2" height="2" fill="#00FF00"/>
<rect x="906" y="152" width="2" height="2" fill="#00FF00"/>
<rect x="914" y="152" width="2" height="2" fill="#00FF00"/>
<rect x="922" y="152" width="2" height="2" fill="#00FF00"/>
<rect x="930" y="152" width="2" height="2" fill="#00FF00"/>
<rect x="938" y="152" width="2" height="2" fill="#00FF00"/>
<rect x="946" y="152" width="2" height="2" fill="#00FF00"/>
<rect x="954" y="152" width="2" height="2" fill="#00FF00"/>
<rect x="826" y="276" width="2" height="2" fill="#00FF00"/>
<rect x="834" y="276" width="2" height="2" fill="#00FF00"/>
<rect x="842" y="276" width="2" height="2" fill="#00FF00"/>
<rect x="850" y="276" width="2" height="2" fill="#00FF00"/>
<rect x="858" y="276" width="2" height="2" fill="#00FF00"/>
<rect x="866" y="276" width="2" height="2" fill="#00FF00"/>
<rect x="874" y="276" width="2" height="2" fill="#00FF00"/>
<rect x="882" y="276" width="2" height="2" fill="#00FF00"/>
<rect x="890" y="276" width="2" height="2" fill="#00FF00"/>
<rect x="898" y="276" width="2" height="2" fill="#00FF00"/>
<rect x="906" y="276" width="2" height="2" fill="#00FF00"/>
<rect x="914" y="276" width="2" height="2" fill="#00FF00"/>
<rect x="922" y="276" width="2" height="2" fill="#00FF00"/>
<rect x="930" y="276" width="2" height="2" fill="#00FF00"/>
<rect x="938" y="276" width="2" height="2" fill="#00FF00"/>
<rect x="946" y="276" width="2" height="2" fill="#00FF00"/>
<rect x="954" y="276" width="2" height="2" fill="#00FF00"/>
<polyline points="212.5,298.5 220.5,280.5 228.5,282.5 236.5,264.5 244.5,270.5 252.5,270.5 260.5,264.5 268.5,232.5 276.5,234.5 284.5,228.5 292.5,259.5 300.5,266.5 308.5,240.5 316.5,232.5 324.5,226.5 332.5,240.5 340.5,198.5 348.5,189.5 356.5,180.5 364.5,173.5 372.5,171.5 380.5,208.5 388.5,221.5 396.5,223.5 404.5,211.5 412.5,210.5 420.5,209.5 428.5,217.5 436.5,209.5 444.5,216.5 452.5,223.5 460.5,227.5 468.5,225.5 476.5,221.5 484.5,217.5 492.5,216.5 500.5,210.5 508.5,210.5 516.5,211.5 524.5,211.5 532.5,211.5 540.5,210.5 548.5,207.5 556.5,210.5 564.5,211.5 572.5,214.5 580.5,214.5 588.5,214.5 596.5,214.5 604.5,216.5 612.5,219.5 620.5,226.5 628.5,219.5 636.5,212.5 644.5,200.5 652.5,203.5 660.5,205.5 668.5,206.5 676.5,208.5 684.5,212.5 692.5,202.5 700.5,202.5 708.5,205.5 716.5,197.5 724.5,202.5 732.5,192.5 740.5,192.5 748.5,194.5 756.5,189.5 764.5,184.5 772.5,172.5 780.5,168.5 788.5,169.5 796.5,169.5 804.5,165.5 812.5,173.5 820.5,176.5 828.5,184.5 836.5,186.5 844.5,186.5 852.5,191.5 860.5,208.5 868.5,225.5 876.5,226.5 884.5,248.5 892.5,239.5 900.5,277.5 908.5,270.5 916.5,260.5 924.5,247.5 932.5,246.5 940.5,239.5 948.5,234.5 956.5,193.5" fill="none" stroke="#FF4500" stroke-width="1"/>
<polyline points="196.5,253.5 204.5,282.5 212.5,259.5 220.5,261.5 228.5,249.5 236.5,233.5 244.5,256.5 252.5,235.5 260.5,219.5 268.5,211.5 276.5,221.5 284.5,215.5 292.5,216.5 300.5,230.5 308.5,198.5 316.5,188.5 324.5,189.5 332.5,170.5 340.5,152.5 348.5,124.5 356.5,136.5 364.5,133.5 372.5,153.5 380.5,145.5 388.5,184.5 396.5,200.5 404.5,192.5 412.5,189.5 420.5,187.5 428.5,189.5 436.5,196.5 444.5,200.5 452.5,210.5 460.5,211.5 468.5,216.5 476.5,210.5 484.5,200.5 492.5,202.5 500.5,202.5 508.5,198.5 516.5,199.5 524.5,200.5 532.5,198.5 540.5,197.5 548.5,196.5 556.5,200.5 564.5,198.5 572.5,197.5 580.5,190.5 588.5,202.5 596.5,207.5 604.5,202.5 612.5,210.5 620.5,212.5 628.5,205.5 636.5,197.5 644.5,190.5 652.5,195.5 660.5,190.5 668.5,192.5 676.5,188.5 684.5,187.5 692.5,191.5 700.5,196.5 708.5,187.5 716.5,187.5 724.5,192.5 732.5,184.5 740.5,185.5 748.5,185.5 756.5,180.5 764.5,163.5 772.5,155.5 780.5,153.5 788.5,158.5 796.5,156.5 804.5,156.5 812.5,162.5 820.5,165.5 828.5,167.5 836.5,174.5 844.5,175.5 852.5,177.5 860.5,185.5 868.5,204.5 876.5,199.5 884.5,214.5 892.5,196.5 900.5,225.5 908.5,248.5 916.5,230.5 924.5,226.5 932.5,217.5 940.5,216.5 948.5,190.5 956.5,146.5" fill="none" stroke="#00BFFF" stroke-width="1"/>
</g>
<rect x="195.5" y="108.5" width="783" height="182" fill="none" stroke="#FFFFFF" stroke-width="1"/>
<rect x="196" y="291" width="1" height="3" fill="#fff"/>
<rect x="260" y="291" width="1" height="3" fill="#fff"/>
<rect x="324" y="291" width="1" height="3" fill="#fff"/>
<rect x="388" y="291" width="1" height="3" fill="#fff"/>
<rect x="452" y="291" width="1" height="3" fill="#fff"/>
<rect x="516" y="291" width="1" height="3" fill="#fff"/>
<rect x="580" y="291" width="1" height="3" fill="#fff"/>
<rect x="644" y="291" width="1" height="3" fill="#fff"/>
<rect x="708" y="291" width="1" height="3" fill="#fff"/>
<rect x="772" y="291" width="1" height="3" fill="#fff"/>
<rect x="836" y="291" width="1" height="3" fill="#fff"/>
<rect x="900" y="291" width="1" height="3" fill="#fff"/>
<rect x="979" y="137" width="2" height="1" fill="#fff"/>
<rect x="979" y="173" width="2" height="1" fill="#fff"/>
<rect x="979" y="209" width="2" height="1" fill="#fff"/>
<rect x="979" y="245" width="2" height="1" fill="#fff"/>
<rect x="979" y="281" width="2" height="1" fill="#fff"/>
<rect x="981" y="177" width="34" height="11" fill="#fff"/>
</svg>
<div class="t" style="left:200px;top:111px;font-size:10px;line-height:12px;color:#fff;transform:scaleX(0.9395);transform-origin:0 0;">GBPCHF,M15</div>
<div class="t" style="left:267px;top:111px;font-size:10px;line-height:12px;color:#fff;transform:scaleX(0.8498);transform-origin:0 0;">1.4507</div>
<div class="t" style="left:298px;top:111px;font-size:10px;line-height:12px;color:#fff;transform:scaleX(0.8498);transform-origin:0 0;">1.4527</div>
<div class="t" style="left:329px;top:111px;font-size:10px;line-height:12px;color:#fff;transform:scaleX(0.8498);transform-origin:0 0;">1.4507</div>
<div class="t" style="left:360px;top:111px;font-size:10px;line-height:12px;color:#fff;transform:scaleX(0.8498);transform-origin:0 0;">1.4519</div>
<div class="t" style="left:195px;top:294px;font-size:10px;line-height:12px;color:#fff;transform:scaleX(0.9123);transform-origin:0 0;">7 Dec 2011</div>
<div class="t" style="left:259px;top:294px;font-size:10px;line-height:12px;color:#fff;transform:scaleX(0.9085);transform-origin:0 0;">7 Dec 16:15</div>
<div class="t" style="left:323px;top:294px;font-size:10px;line-height:12px;color:#fff;transform:scaleX(0.9085);transform-origin:0 0;">7 Dec 18:15</div>
<div class="t" style="left:387px;top:294px;font-size:10px;line-height:12px;color:#fff;transform:scaleX(0.9085);transform-origin:0 0;">7 Dec 20:15</div>
<div class="t" style="left:451px;top:294px;font-size:10px;line-height:12px;color:#fff;transform:scaleX(0.9085);transform-origin:0 0;">7 Dec 22:15</div>
<div class="t" style="left:515px;top:294px;font-size:10px;line-height:12px;color:#fff;transform:scaleX(0.9085);transform-origin:0 0;">8 Dec 00:15</div>
<div class="t" style="left:579px;top:294px;font-size:10px;line-height:12px;color:#fff;transform:scaleX(0.9085);transform-origin:0 0;">8 Dec 02:15</div>
<div class="t" style="left:643px;top:294px;font-size:10px;line-height:12px;color:#fff;transform:scaleX(0.9085);transform-origin:0 0;">8 Dec 04:15</div>
<div class="t" style="left:707px;top:294px;font-size:10px;line-height:12px;color:#fff;transform:scaleX(0.9085);transform-origin:0 0;">8 Dec 06:15</div>
<div class="t" style="left:771px;top:294px;font-size:10px;line-height:12px;color:#fff;transform:scaleX(0.9085);transform-origin:0 0;">8 Dec 08:15</div>
<div class="t" style="left:835px;top:294px;font-size:10px;line-height:12px;color:#fff;transform:scaleX(0.9085);transform-origin:0 0;">8 Dec 10:15</div>
<div class="t" style="left:899px;top:294px;font-size:10px;line-height:12px;color:#fff;transform:scaleX(0.9085);transform-origin:0 0;">8 Dec 12:15</div>
<div class="t" style="left:985px;top:131px;font-size:10px;line-height:12px;color:#fff;transform:scaleX(0.8498);transform-origin:0 0;">1.4545</div>
<div class="t" style="left:985px;top:167px;font-size:10px;line-height:12px;color:#fff;transform:scaleX(0.8498);transform-origin:0 0;">1.4525</div>
<div class="t" style="left:985px;top:203px;font-size:10px;line-height:12px;color:#fff;transform:scaleX(0.8498);transform-origin:0 0;">1.4505</div>
<div class="t" style="left:985px;top:239px;font-size:10px;line-height:12px;color:#fff;transform:scaleX(0.8498);transform-origin:0 0;">1.4485</div>
<div class="t" style="left:985px;top:275px;font-size:10px;line-height:12px;color:#fff;transform:scaleX(0.8498);transform-origin:0 0;">1.4465</div>
<div class="t" style="left:985px;top:177px;font-size:10px;line-height:12px;color:#000;transform:scaleX(0.8498);transform-origin:0 0;">1.4519</div>
<div style="position:absolute;left:1018px;top:105px;width:1px;height:204px;background:#F4F2EA"></div>
<div style="position:absolute;left:1019px;top:105px;width:1px;height:205px;background:#FFFFFF"></div>
<div style="position:absolute;left:193px;top:308px;width:826px;height:1px;background:#F4F2EA"></div>
<div style="position:absolute;left:193px;top:309px;width:827px;height:1px;background:#FFFFFF"></div>
<div style="position:absolute;left:193px;top:310px;width:827px;height:1px;background:#000"></div>
<div style="position:absolute;left:193px;top:311px;width:827px;height:1px;background:#FBFAF4"></div>
<div class="t" style="left:205px;top:313px;font-size:11px;line-height:13px;color:#66645A;transform:scaleX(0.9267);transform-origin:0 0;">CHFJPY,M15</div>
<div style="position:absolute;left:279px;top:313px;width:1px;height:13px;background:#66645A"></div>
<div class="t" style="left:289px;top:313px;font-size:11px;line-height:13px;color:#66645A;transform:scaleX(0.9480);transform-origin:0 0;">CADJPY,M15</div>
<div style="position:absolute;left:363px;top:313px;width:1px;height:13px;background:#66645A"></div>
<div class="t" style="left:373px;top:313px;font-size:11px;line-height:13px;color:#66645A;transform:scaleX(0.9167);transform-origin:0 0;">USDCAD,M15</div>
<div style="position:absolute;left:451px;top:313px;width:1px;height:13px;background:#66645A"></div>
<div class="t" style="left:462px;top:313px;font-size:11px;line-height:13px;color:#66645A;transform:scaleX(0.9106);transform-origin:0 0;">NZDUSD,M15</div>
<div style="position:absolute;left:539px;top:313px;width:1px;height:13px;background:#66645A"></div>
<div class="t" style="left:550px;top:313px;font-size:11px;line-height:13px;color:#66645A;transform:scaleX(0.9022);transform-origin:0 0;">XAGUSD,M15</div>
<div style="position:absolute;left:627px;top:313px;width:1px;height:13px;background:#66645A"></div>
<div class="t" style="left:637px;top:313px;font-size:11px;line-height:13px;color:#66645A;transform:scaleX(0.8963);transform-origin:0 0;">XAGUSD,H4</div>
<div style="position:absolute;left:707px;top:313px;width:1px;height:13px;background:#66645A"></div>
<div class="t" style="left:717px;top:313px;font-size:11px;line-height:13px;color:#66645A;transform:scaleX(0.9136);transform-origin:0 0;">EURJPY,H4</div>
<div style="position:absolute;left:783px;top:313px;width:1px;height:13px;background:#66645A"></div>
<div class="t" style="left:793px;top:313px;font-size:11px;line-height:13px;color:#66645A;transform:scaleX(0.8953);transform-origin:0 0;">EURUSD,M5</div>
<div style="position:absolute;left:863px;top:313px;width:1px;height:13px;background:#66645A"></div>
<div class="t" style="left:872px;top:313px;font-size:11px;line-height:13px;color:#66645A;transform:scaleX(0.9022);transform-origin:0 0;">GBPUSD,M15</div>
<div style="position:absolute;left:948px;top:313px;width:1px;height:13px;background:#66645A"></div>
<div class="a" style="left:958px;top:310px;width:27px;height:18px;overflow:hidden">
<div class="t" style="left:0px;top:3px;font-size:11px;line-height:13px;color:#66645A;transform:scaleX(0.9629);transform-origin:0 0;">EURC</div>
</div>
<svg class="a" style="left:990px;top:316px" width="24" height="9"><path d="M5 0.5V8.5L1 4.5Z" fill="#000"/><path d="M18.5 0.5V8.5L22.5 4.5Z" fill="#000"/></svg>
<div style="position:absolute;left:4px;top:330px;width:1016px;height:1px;background:#FFFFFF"></div>
<svg class="a" style="left:8px;top:337px" width="6" height="5" shape-rendering="crispEdges"><path d="M0 0h2v1h-2zM4 0h2v1h-2zM1 1h4v1h-4zM2 2h2v1h-2zM1 3h4v1h-4zM0 4h2v1h-2zM4 4h2v1h-2z" fill="#000"/></svg>
<div class="a" style="left:5px;top:348px;width:13px;height:170px;background:linear-gradient(to bottom,#A9C1F1,#7B9BE2)"></div>
<div class="t" style="left:-10px;top:486px;width:44px;font-size:11px;line-height:13px;color:#E8EEF9;transform:rotate(-90deg);transform-origin:22px 6px;text-align:left">Terminal</div>
<div style="position:absolute;left:19px;top:334px;width:998px;height:164px;background:#fff;border-top:1px solid #ACA899;border-left:1px solid #ACA899"></div>
<div style="position:absolute;left:20px;top:335px;width:996px;height:19px;background:linear-gradient(to bottom,#ECE9D8 0,#ECE9D8 14px,#E4E0CF 16px,#DCD8C5 17px,#D0CCB8 19px)"></div>
<div style="position:absolute;left:118px;top:338px;width:1px;height:14px;background:#C7C5B2"></div>
<div style="position:absolute;left:119px;top:338px;width:1px;height:14px;background:#FFF"></div>
<div style="position:absolute;left:239px;top:338px;width:1px;height:14px;background:#C7C5B2"></div>
<div style="position:absolute;left:240px;top:338px;width:1px;height:14px;background:#FFF"></div>
<div style="position:absolute;left:312px;top:338px;width:1px;height:14px;background:#C7C5B2"></div>
<div style="position:absolute;left:313px;top:338px;width:1px;height:14px;background:#FFF"></div>
<div style="position:absolute;left:387px;top:338px;width:1px;height:14px;background:#C7C5B2"></div>
<div style="position:absolute;left:388px;top:338px;width:1px;height:14px;background:#FFF"></div>
<div style="position:absolute;left:461px;top:338px;width:1px;height:14px;background:#C7C5B2"></div>
<div style="position:absolute;left:462px;top:338px;width:1px;height:14px;background:#FFF"></div>
<div style="position:absolute;left:1014px;top:338px;width:1px;height:14px;background:#C7C5B2"></div>
<div style="position:absolute;left:1015px;top:338px;width:1px;height:14px;background:#FFF"></div>
<div class="t" style="left:29px;top:339px;font-size:11px;line-height:13px;transform:scaleX(0.9267);transform-origin:0 0;">Symbol</div>
<div class="t" style="left:129px;top:339px;font-size:11px;line-height:13px;transform:scaleX(0.9462);transform-origin:0 0;">Condition</div>
<div class="t" style="left:269px;top:339px;font-size:11px;line-height:13px;transform:scaleX(0.9705);transform-origin:0 0;">Counter</div>
<div class="t" style="left:359px;top:339px;font-size:11px;line-height:13px;transform:scaleX(0.9475);transform-origin:0 0;">Limit</div>
<div class="t" style="left:417px;top:339px;font-size:11px;line-height:13px;transform:scaleX(0.9658);transform-origin:0 0;">Timeout</div>
<div class="t" style="left:470px;top:339px;font-size:11px;line-height:13px;transform:scaleX(0.9945);transform-origin:0 0;">Event</div>
<div style="position:absolute;left:20px;top:497px;width:997px;height:1px;background:#000"></div>
<div style="position:absolute;left:1018px;top:330px;width:1px;height:189px;background:#fff"></div>
<div style="position:absolute;left:20px;top:498px;width:998px;height:20px;background:#ECE9D8"></div>
<div style="position:absolute;left:19px;top:498px;width:1px;height:20px;background:#ACA899"></div>
<div style="position:absolute;left:212px;top:497px;width:48px;height:18px;background:#fff;border:1px solid #000;border-top:none"></div>
<div class="t" style="left:32px;top:501px;font-size:11px;line-height:13px;color:#66645A;transform:scaleX(0.9526);transform-origin:0 0;">Trade</div>
<div class="t" style="left:80px;top:501px;font-size:11px;line-height:13px;color:#66645A;transform:scaleX(0.9732);transform-origin:0 0;">Account History</div>
<div class="t" style="left:175px;top:501px;font-size:11px;line-height:13px;color:#66645A;transform:scaleX(0.9455);transform-origin:0 0;">News</div>
<div class="t" style="left:222px;top:501px;font-size:11px;line-height:13px;color:#000;transform:scaleX(0.9600);transform-origin:0 0;">Alerts</div>
<div class="t" style="left:269px;top:501px;font-size:11px;line-height:13px;color:#66645A;transform:scaleX(0.9497);transform-origin:0 0;">Mailbox</div>
<div class="t" style="left:325px;top:501px;font-size:11px;line-height:13px;color:#66645A;transform:scaleX(0.9916);transform-origin:0 0;">Experts</div>
<div class="t" style="left:383px;top:501px;font-size:11px;line-height:13px;color:#66645A;transform:scaleX(0.9697);transform-origin:0 0;">Journal</div>
<div style="position:absolute;left:70px;top:502px;width:1px;height:12px;background:#66645A"></div>
<div style="position:absolute;left:166px;top:502px;width:1px;height:12px;background:#66645A"></div>
<div style="position:absolute;left:316px;top:502px;width:1px;height:12px;background:#66645A"></div>
<div style="position:absolute;left:373px;top:502px;width:1px;height:12px;background:#66645A"></div>
<div style="position:absolute;left:428px;top:502px;width:1px;height:12px;background:#66645A"></div>
<div style="position:absolute;left:4px;top:518px;width:1016px;height:1px;background:#FFFFFF"></div>
<div style="position:absolute;left:4px;top:519px;width:1016px;height:1px;background:#ACA899"></div>
<div style="position:absolute;left:4px;top:520px;width:1016px;height:1px;background:#ACA899"></div>
<div style="position:absolute;left:4px;top:521px;width:1016px;height:1px;background:#FFFFFF"></div>
<div class="t" style="left:6px;top:527px;font-size:11px;line-height:13px;transform:scaleX(0.9438);transform-origin:0 0;">For Help, press F1</div>
<div style="position:absolute;left:300px;top:524px;width:1px;height:17px;background:#ACA899"></div>
<div style="position:absolute;left:301px;top:524px;width:1px;height:17px;background:#FFF"></div>
<div style="position:absolute;left:408px;top:524px;width:1px;height:17px;background:#ACA899"></div>
<div style="position:absolute;left:409px;top:524px;width:1px;height:17px;background:#FFF"></div>
<div style="position:absolute;left:509px;top:524px;width:1px;height:17px;background:#ACA899"></div>
<div style="position:absolute;left:510px;top:524px;width:1px;height:17px;background:#FFF"></div>
<div style="position:absolute;left:581px;top:524px;width:1px;height:17px;background:#ACA899"></div>
<div style="position:absolute;left:582px;top:524px;width:1px;height:17px;background:#FFF"></div>
<div style="position:absolute;left:652px;top:524px;width:1px;height:17px;background:#ACA899"></div>
<div style="position:absolute;left:653px;top:524px;width:1px;height:17px;background:#FFF"></div>
<div style="position:absolute;left:721px;top:524px;width:1px;height:17px;background:#ACA899"></div>
<div style="position:absolute;left:722px;top:524px;width:1px;height:17px;background:#FFF"></div>
<div style="position:absolute;left:792px;top:524px;width:1px;height:17px;background:#ACA899"></div>
<div style="position:absolute;left:793px;top:524px;width:1px;height:17px;background:#FFF"></div>
<div style="position:absolute;left:858px;top:524px;width:1px;height:17px;background:#ACA899"></div>
<div style="position:absolute;left:859px;top:524px;width:1px;height:17px;background:#FFF"></div>
<div class="t" style="left:304px;top:527px;font-size:11px;line-height:13px;transform:scaleX(1.0036);transform-origin:0 0;">Default</div>
<div class="t" style="left:413px;top:527px;font-size:11px;line-height:13px;transform:scaleX(1.0243);transform-origin:0 0;">2011.12.07 18:45</div>
<div class="t" style="left:514px;top:527px;font-size:11px;line-height:13px;transform:scaleX(1.0129);transform-origin:0 0;">O: 1.4515</div>
<div class="t" style="left:586px;top:527px;font-size:11px;line-height:13px;transform:scaleX(1.0052);transform-origin:0 0;">H: 1.4516</div>
<div class="t" style="left:657px;top:527px;font-size:11px;line-height:13px;transform:scaleX(1.0014);transform-origin:0 0;">L: 1.4505</div>
<div class="t" style="left:726px;top:527px;font-size:11px;line-height:13px;transform:scaleX(1.0262);transform-origin:0 0;">C: 1.4515</div>
<div class="t" style="left:797px;top:527px;font-size:11px;line-height:13px;transform:scaleX(1.0179);transform-origin:0 0;">V: 235</div>
<div class="t" style="left:911px;top:527px;font-size:11px;line-height:13px;transform:scaleX(0.9922);transform-origin:0 0;">4351/6 kb</div>
<svg class="a" style="left:864px;top:527px" width="24" height="12" shape-rendering="crispEdges"><rect x="0" y="10" width="2" height="2" fill="#9A0800"/><rect x="0" y="0" width="2" height="9" fill="#4A7800"/><rect x="3" y="9" width="2" height="3" fill="#9A0800"/><rect x="3" y="0" width="2" height="8" fill="#4A7800"/><rect x="6" y="8" width="2" height="4" fill="#9A0800"/><rect x="6" y="0" width="2" height="7" fill="#4A7800"/><rect x="9" y="7" width="2" height="5" fill="#9A0800"/><rect x="9" y="0" width="2" height="6" fill="#4A7800"/><rect x="12" y="6" width="2" height="6" fill="#9A0800"/><rect x="12" y="0" width="2" height="5" fill="#4A7800"/><rect x="15" y="5" width="2" height="7" fill="#9A0800"/><rect x="15" y="0" width="2" height="4" fill="#4A7800"/><rect x="18" y="4" width="2" height="8" fill="#9A0800"/><rect x="18" y="0" width="2" height="3" fill="#4A7800"/><rect x="21" y="3" width="2" height="9" fill="#9A0800"/><rect x="21" y="0" width="2" height="2" fill="#4A7800"/></svg>
<svg class="a" style="left:1004px;top:526px" width="16" height="16" shape-rendering="crispEdges"><rect x="15" y="1" width="1" height="1" fill="#ACA899"/><rect x="15" y="2" width="1" height="1" fill="#fff"/><rect x="14" y="2" width="1" height="1" fill="#ACA899"/><rect x="14" y="3" width="1" height="1" fill="#fff"/><rect x="13" y="3" width="1" height="1" fill="#ACA899"/><rect x="13" y="4" width="1" height="1" fill="#fff"/><rect x="12" y="4" width="1" height="1" fill="#ACA899"/><rect x="12" y="5" width="1" height="1" fill="#fff"/><rect x="11" y="5" width="1" height="1" fill="#ACA899"/><rect x="11" y="6" width="1" height="1" fill="#fff"/><rect x="10" y="6" width="1" height="1" fill="#ACA899"/><rect x="10" y="7" width="1" height="1" fill="#fff"/><rect x="9" y="7" width="1" height="1" fill="#ACA899"/><rect x="9" y="8" width="1" height="1" fill="#fff"/><rect x="8" y="8" width="1" height="1" fill="#ACA899"/><rect x="8" y="9" width="1" height="1" fill="#fff"/><rect x="7" y="9" width="1" height="1" fill="#ACA899"/><rect x="7" y="10" width="1" height="1" fill="#fff"/><rect x="6" y="10" width="1" height="1" fill="#ACA899"/><rect x="6" y="11" width="1" height="1" fill="#fff"/><rect x="5" y="11" width="1" height="1" fill="#ACA899"/><rect x="5" y="12" width="1" height="1" fill="#fff"/><rect x="4" y="12" width="1" height="1" fill="#ACA899"/><rect x="4" y="13" width="1" height="1" fill="#fff"/><rect x="3" y="13" width="1" height="1" fill="#ACA899"/><rect x="3" y="14" width="1" height="1" fill="#fff"/><rect x="2" y="14" width="1" height="1" fill="#ACA899"/><rect x="2" y="15" width="1" height="1" fill="#fff"/><rect x="1" y="15" width="1" height="1" fill="#ACA899"/><rect x="1" y="16" width="1" height="1" fill="#fff"/><rect x="15" y="5" width="1" height="1" fill="#ACA899"/><rect x="15" y="6" width="1" height="1" fill="#fff"/><rect x="14" y="6" width="1" height="1" fill="#ACA899"/><rect x="14" y="7" width="1" height="1" fill="#fff"/><rect x="13" y="7" width="1" height="1" fill="#ACA899"/><rect x="13" y="8" width="1" height="1" fill="#fff"/><rect x="12" y="8" width="1" height="1" fill="#ACA899"/><rect x="12" y="9" width="1" height="1" fill="#fff"/><rect x="11" y="9" width="1" height="1" fill="#ACA899"/><rect x="11" y="10" width="1" height="1" fill="#fff"/><rect x="10" y="10" width="1" height="1" fill="#ACA899"/><rect x="10" y="11" width="1" height="1" fill="#fff"/><rect x="9" y="11" width="1" height="1" fill="#ACA899"/><rect x="9" y="12" width="1" height="1" fill="#fff"/><rect x="8" y="12" width="1" height="1" fill="#ACA899"/><rect x="8" y="13" width="1" height="1" fill="#fff"/><rect x="7" y="13" width="1" height="1" fill="#ACA899"/><rect x="7" y="14" width="1" height="1" fill="#fff"/><rect x="6" y="14" width="1" height="1" fill="#ACA899"/><rect x="6" y="15" width="1" height="1" fill="#fff"/><rect x="5" y="15" width="1" height="1" fill="#ACA899"/><rect x="5" y="16" width="1" height="1" fill="#fff"/><rect x="15" y="9" width="1" height="1" fill="#ACA899"/><rect x="15" y="10" width="1" height="1" fill="#fff"/><rect x="14" y="10" width="1" height="1" fill="#ACA899"/><rect x="14" y="11" width="1" height="1" fill="#fff"/><rect x="13" y="11" width="1" height="1" fill="#ACA899"/><rect x="13" y="12" width="1" height="1" fill="#fff"/><rect x="12" y="12" width="1" height="1" fill="#ACA899"/><rect x="12" y="13" width="1" height="1" fill="#fff"/><rect x="11" y="13" width="1" height="1" fill="#ACA899"/><rect x="11" y="14" width="1" height="1" fill="#fff"/><rect x="10" y="14" width="1" height="1" fill="#ACA899"/><rect x="10" y="15" width="1" height="1" fill="#fff"/><rect x="9" y="15" width="1" height="1" fill="#ACA899"/><rect x="9" y="16" width="1" height="1" fill="#fff"/></svg></body></html>
